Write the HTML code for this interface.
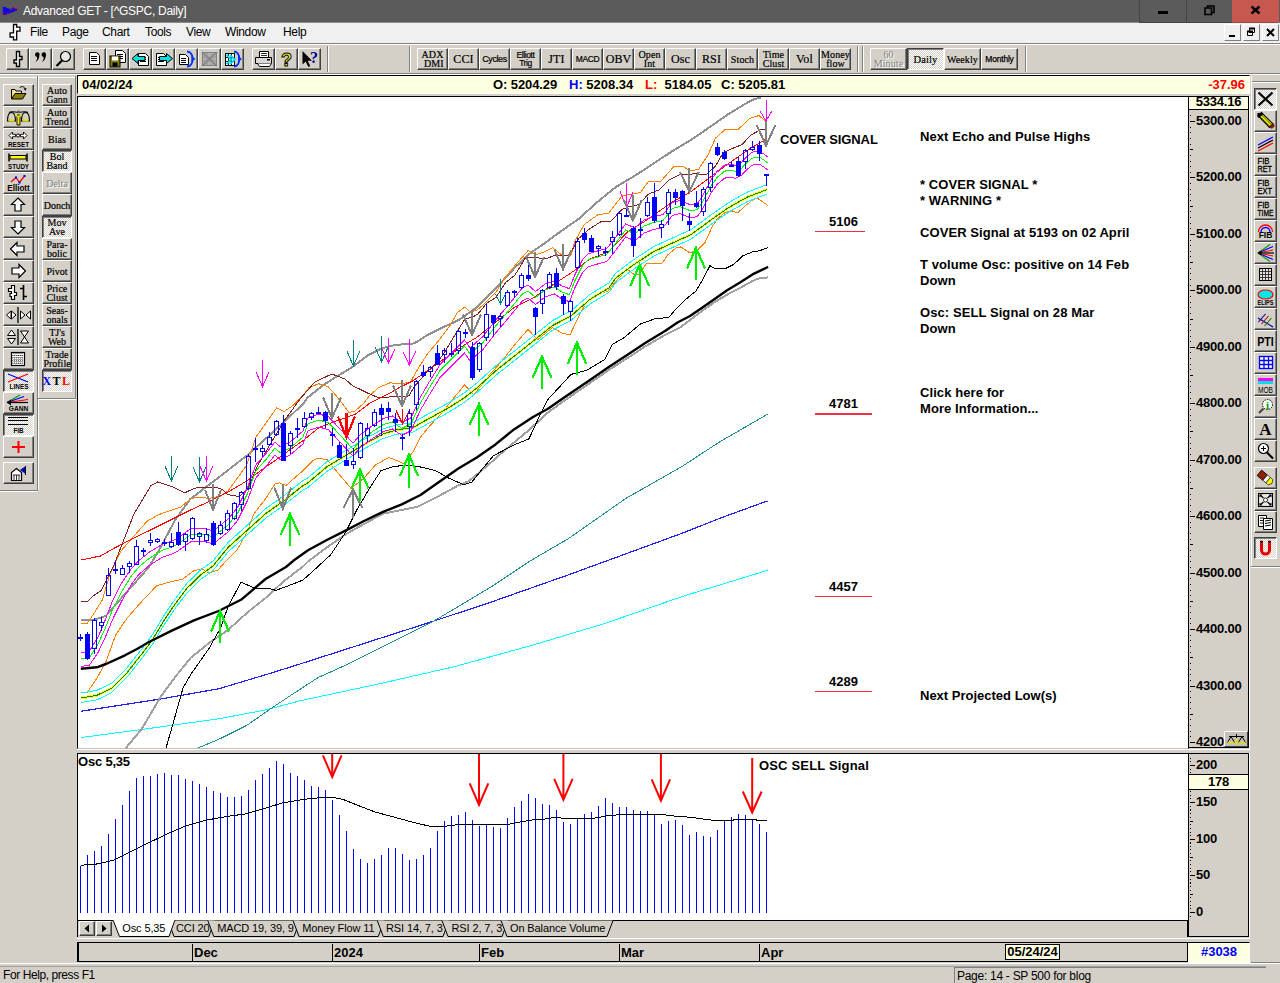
<!DOCTYPE html>
<html><head><meta charset="utf-8"><title>Advanced GET</title><style>
*{margin:0;padding:0;box-sizing:border-box}
html,body{width:1280px;height:983px;overflow:hidden;background:#d4d0c8;font-family:"Liberation Sans",sans-serif}
#r{position:absolute;left:0;top:0;width:1280px;height:983px;overflow:hidden;background:#d4d0c8}
.a{position:absolute}
.tb{position:absolute;background:#d4d0c8;border-top:1px solid #fff;border-left:1px solid #fff;border-right:1px solid #404040;border-bottom:1px solid #404040;box-shadow:inset -1px -1px 0 #808080;overflow:hidden}
.tb.dn{border-top:1px solid #404040;border-left:1px solid #404040;border-right:1px solid #fff;border-bottom:1px solid #fff;box-shadow:inset 1px 1px 0 #808080;background:#eae8e4 conic-gradient(#fff 25%,#d4d0c8 0 50%,#fff 0 75%,#d4d0c8 0) 0 0/2px 2px}
.tb svg{position:absolute;left:0;top:0}
.st{font-family:"Liberation Serif",serif;font-weight:bold;font-size:10px;line-height:9px;text-align:center;color:#000;display:flex;align-items:center;justify-content:center;letter-spacing:0.1px}
.gy{color:#808080;text-shadow:1px 1px 0 #fff}
.ax{position:absolute;font-weight:bold;font-size:13px;line-height:14px;color:#000;white-space:nowrap;letter-spacing:-0.2px}
.t{position:absolute;font-weight:bold;font-size:13px;line-height:16px;color:#000;white-space:nowrap}
.m{position:absolute;top:24px;font-size:12px;letter-spacing:-0.35px;line-height:16px;color:#000}
.hl{position:absolute;height:1px}
.vl{position:absolute;width:1px}
.tab{position:absolute;top:921px;font-size:11px;letter-spacing:-0.12px;line-height:14px;color:#000;white-space:nowrap}
#cs{position:absolute;left:0;top:0}
</style></head><body><div id="r">
<div class="a" style="left:0;top:0;width:1280px;height:23px;background:#5b5b5b;border-bottom:1px solid #8e8e8e"></div>
<div class="a" style="left:23px;top:3px;font-size:12px;letter-spacing:-0.28px;line-height:16px;color:#fff;white-space:nowrap">Advanced GET - [^GSPC, Daily]</div>
<svg class="a" style="left:0px;top:0px" width="22" height="22" viewBox="0 0 22 22"><path d="M2.800 7h3.300v1h2.500v1h2.200l1.800-1.500h1.500v1h2.800v2.300h-2.300v1h-2.500v1h-2.500v1h-2.300v1h-4.500z" fill="#0000f0"/><path d="M2.100 14.800L4.700 12.400L6.300 14.500L13.400 7.500L15.500 9.400L17.800 7.300" stroke="#ff0000" stroke-width="1" fill="none" stroke-dasharray="1.2 0.6"/></svg>
<div class="a" style="left:1139px;top:0;width:47px;height:23px;background:#5b5b5b;border-left:1px solid #454545;border-bottom:1px solid #454545"></div>
<div class="a" style="left:1186px;top:0;width:47px;height:23px;background:#5b5b5b;border-left:1px solid #454545;border-bottom:1px solid #454545"></div>
<div class="a" style="left:1232px;top:0;width:47px;height:23px;background:#c75850;border-bottom:1px solid #9a4a44"></div>
<div class="a" style="left:1158px;top:11px;width:10px;height:3px;background:#000"></div>
<svg class="a" style="left:1200px;top:2px" width="20" height="16"><path d="M5 6h6.500v6.500h-6.500z M7.500 6v-2h6.500v6.500h-2.500" fill="none" stroke="#000" stroke-width="1.600"/></svg>
<svg class="a" style="left:1247px;top:3px" width="16" height="14"><path d="M4.500 3.500l8 7M12.500 3.500l-8 7" stroke="#000" stroke-width="2.400"/></svg>
<div class="a" style="left:0;top:23px;width:1280px;height:20px;background:#f0f0f0"></div>
<div class="m" style="left:30px">File</div>
<div class="m" style="left:62px">Page</div>
<div class="m" style="left:102px">Chart</div>
<div class="m" style="left:145px">Tools</div>
<div class="m" style="left:186px">View</div>
<div class="m" style="left:225px">Window</div>
<div class="m" style="left:283px">Help</div>
<svg class="a" style="left:7px;top:23px" width="14" height="20" viewBox="0 0 14 20"><path d="M6.500 1.500h3.200v2.600h3.300v4h-3.300v8.700h-3.200v-2.800h-3.400v-4.200h3.400z" fill="#fff" stroke="#000" stroke-width="1.3"/></svg>
<div class="a" style="left:1224px;top:24px;width:17px;height:17px;background:#f0f0f0;border-top:1px solid #fff;border-left:1px solid #fff;border-right:1px solid #808080;border-bottom:1px solid #808080;overflow:hidden"><svg width="15" height="15" viewBox="0 0 15 15" ><rect x="4" y="10" width="6" height="2" fill="#000"/></svg></div>
<div class="a" style="left:1243px;top:24px;width:17px;height:17px;background:#f0f0f0;border-top:1px solid #fff;border-left:1px solid #fff;border-right:1px solid #808080;border-bottom:1px solid #808080;overflow:hidden"><svg width="15" height="15" viewBox="0 0 15 15" ><path d="M5.500 3.500h5v4h-5z M3.500 6.500h5v4h-5z" fill="#f0f0f0" stroke="#000" stroke-width="1"/><path d="M5 3.500h6M3 6.500h6" stroke="#000" stroke-width="2"/></svg></div>
<div class="a" style="left:1262px;top:24px;width:17px;height:17px;background:#f0f0f0;border-top:1px solid #fff;border-left:1px solid #fff;border-right:1px solid #808080;border-bottom:1px solid #808080;overflow:hidden"><svg width="15" height="15" viewBox="0 0 15 15" ><path d="M4 4l7 7M11 4l-7 7" stroke="#000" stroke-width="2"/></svg></div>
<div class="hl" style="left:0;top:43px;width:1280px;background:#808080"></div>
<div class="hl" style="left:0;top:44px;width:1280px;background:#fff"></div>
<div class="hl" style="left:0;top:73px;width:1280px;background:#808080"></div>
<div class="hl" style="left:0;top:74px;width:1280px;background:#fff"></div>
<div class="tb " style="left:6px;top:48px;width:23px;height:22px;"><svg width="21" height="20" viewBox="0 1 21 20" ><path d="M9.5 3.5h3v5h2.5v3h-2.5v7h-3v-3.5h-2.5v-3h2.5z" fill="#fff" stroke="#000" stroke-width="1.4"/></svg></div>
<div class="tb " style="left:29px;top:48px;width:23px;height:22px;"><svg width="21" height="20" viewBox="0 1 21 20" ><path d="M5 6.5a2.3 2.3 0 1 1 4.3 1.2c0 3-1.5 5-4 6.3c1.3-1.5 2-3 1.800-5.100a2.300 2.300 0 0 1-2.100-2.400z M11.5 6.5a2.300 2.300 0 1 1 4.300 1.200c0 3-1.500 5-4 6.300c1.300-1.500 2-3 1.800-5.100a2.300 2.300 0 0 1-2.100-2.400z" fill="#000"/></svg></div>
<div class="tb " style="left:52px;top:48px;width:23px;height:22px;"><svg width="21" height="20" viewBox="0 1 21 20" ><circle cx="12.500" cy="8.500" r="5" fill="#e8e8e8" stroke="#000" stroke-width="1.2"/><path d="M9 12.500l-5.500 5.500" stroke="#000" stroke-width="2.2"/></svg></div>
<div class="tb " style="left:83px;top:48px;width:23px;height:22px;"><svg width="21" height="20" viewBox="0 1 21 20" ><path d="M5.5 4.5h7l3 3v9h-10z" fill="#fff" stroke="#000" stroke-width="1"/><path d="M7 8.5h6" stroke="#000" stroke-width="1"/><path d="M7 10.5h6" stroke="#000" stroke-width="1"/><path d="M7 12.5h6" stroke="#000" stroke-width="1"/></svg></div>
<div class="tb " style="left:106px;top:48px;width:23px;height:22px;"><svg width="21" height="20" viewBox="0 1 21 20" ><path d="M8.5 2.5h7l3 3v9h-10z" fill="#fff" stroke="#000" stroke-width="1"/><path d="M10 6.5h6" stroke="#000" stroke-width="1"/><path d="M10 8.5h6" stroke="#000" stroke-width="1"/><path d="M10 10.5h6" stroke="#000" stroke-width="1"/><rect x="3" y="8" width="10" height="11" fill="#8a7a00" stroke="#000"/><rect x="5" y="8.500" width="6" height="4" fill="#fff"/><rect x="5.500" y="14.500" width="5" height="4" fill="#000"/></svg></div>
<div class="tb " style="left:129px;top:48px;width:23px;height:22px;"><svg width="21" height="20" viewBox="0 1 21 20" ><path d="M8.5 5.5h7l3 3v9h-10z" fill="#fff" stroke="#000" stroke-width="1"/><path d="M10 9.5h6" stroke="#000" stroke-width="1"/><path d="M10 11.5h6" stroke="#000" stroke-width="1"/><path d="M10 13.5h6" stroke="#000" stroke-width="1"/><path d="M2 10.500l6-5v3h7v4h-7v3z" fill="#00e0e0" stroke="#000" stroke-width="1"/></svg></div>
<div class="tb " style="left:152px;top:48px;width:23px;height:22px;"><svg width="21" height="20" viewBox="0 1 21 20" ><path d="M3.5 5.5h7l3 3v9h-10z" fill="#fff" stroke="#000" stroke-width="1"/><path d="M5 9.5h6" stroke="#000" stroke-width="1"/><path d="M5 11.5h6" stroke="#000" stroke-width="1"/><path d="M5 13.5h6" stroke="#000" stroke-width="1"/><path d="M19.500 10.500l-6-5v3h-7v4h7v3z" fill="#00e0e0" stroke="#000" stroke-width="1"/></svg></div>
<div class="tb " style="left:175px;top:48px;width:23px;height:22px;"><svg width="21" height="20" viewBox="0 1 21 20" ><path d="M3.5 6.5h6l3 3v7h-9z" fill="#fff" stroke="#000" stroke-width="1"/><path d="M5 10.5h5" stroke="#000" stroke-width="1"/><path d="M5 12.5h5" stroke="#000" stroke-width="1"/><path d="M5 14.5h5" stroke="#000" stroke-width="1"/><path d="M11 3.500c7.500 0 7.500 15 0 15" fill="none" stroke="#0030ff" stroke-width="2"/><path d="M15.500 8l4 3-4 3z" fill="#0030ff"/></svg></div>
<div class="tb " style="left:198px;top:48px;width:23px;height:22px;"><svg width="21" height="20" viewBox="0 1 21 20" ><rect x="3.500" y="4.500" width="14" height="13" fill="#b0b0b0" stroke="#808080"/><path d="M3 4l15 14M18 4l-15 14" stroke="#808080" stroke-width="1.5"/><path d="M3.5 9h14M3.5 13h14M8 4.500v13M13 4.500v13" stroke="#909090"/></svg></div>
<div class="tb " style="left:221px;top:48px;width:23px;height:22px;"><svg width="21" height="20" viewBox="0 1 21 20" ><rect x="3.500" y="5.500" width="9" height="12" fill="#fff" stroke="#000"/><path d="M3.500 9.500h9M3.500 13.500h9M6.500 5.500v12M9.500 5.500v12" stroke="#000" stroke-width=".9"/><path d="M4.500 7l5 4.500-5 4.500M8 7l5 4.500-5 4.500" fill="none" stroke="#00d8e8" stroke-width="1.800"/><path d="M12 3.500c7 0 7 15 0 15" fill="none" stroke="#0030ff" stroke-width="2"/><path d="M16 8l4 3-4 3z" fill="#0030ff"/></svg></div>
<div class="tb " style="left:252px;top:48px;width:23px;height:22px;"><svg width="21" height="20" viewBox="0 1 21 20" ><path d="M6.500 9v-5.500h9l0 5.500" fill="#fff" stroke="#000"/><path d="M2.500 9.500h16v6h-16z" fill="#d8d8d8" stroke="#000"/><path d="M4.500 15.500l2 3h10l2-3" fill="#fff" stroke="#000"/><path d="M8 5.500h6M8 7.500h6" stroke="#000" stroke-width=".8"/><rect x="14" y="11" width="3" height="1.500" fill="#000"/></svg></div>
<div class="tb " style="left:275px;top:48px;width:23px;height:22px;"><svg width="21" height="20" viewBox="0 1 21 20" ><text x="10.500" y="17.500" font-family="Liberation Sans, sans-serif" font-size="18" font-weight="bold" text-anchor="middle" fill="#ffff00" stroke="#000" stroke-width="1">?</text></svg></div>
<div class="tb " style="left:298px;top:48px;width:23px;height:22px;"><svg width="21" height="20" viewBox="0 1 21 20" ><path d="M3.500 3v13.500l3.200-3 2.600 5.500 2-1-2.600-5.200h4.300z" fill="#000"/><text x="15" y="14.500" font-family="Liberation Serif, serif" font-size="16" font-weight="bold" text-anchor="middle" fill="#000090">?</text></svg></div>
<div class="vl" style="left:327px;top:46px;height:26px;background:#808080"></div><div class="vl" style="left:328px;top:46px;height:26px;background:#fff"></div>
<div class="vl" style="left:409px;top:46px;height:26px;background:#808080"></div><div class="vl" style="left:410px;top:46px;height:26px;background:#fff"></div>
<div class="vl" style="left:857px;top:46px;height:26px;background:#808080"></div><div class="vl" style="left:858px;top:46px;height:26px;background:#fff"></div>
<div class="vl" style="left:862px;top:46px;height:26px;background:#808080"></div><div class="vl" style="left:863px;top:46px;height:26px;background:#fff"></div>
<div class="vl" style="left:1025px;top:46px;height:26px;background:#808080"></div><div class="vl" style="left:1026px;top:46px;height:26px;background:#fff"></div>
<div class="tb st " style="left:417px;top:48px;width:31px;height:22px;font-size:10px;font-weight:normal;-webkit-text-stroke:0.2px #000;">ADX<br>&nbsp;DMI</div>
<div class="tb st " style="left:448px;top:48px;width:31px;height:22px;font-size:12px;font-weight:normal;-webkit-text-stroke:0.2px #000;">CCI</div>
<div class="tb st " style="left:479px;top:48px;width:31px;height:22px;font-size:9px;font-family:'Liberation Sans',sans-serif;letter-spacing:-0.4px;line-height:8px;font-weight:normal;-webkit-text-stroke:0.2px #000;">Cycles</div>
<div class="tb st " style="left:510px;top:48px;width:31px;height:22px;font-size:8.5px;font-family:'Liberation Sans',sans-serif;letter-spacing:-0.4px;line-height:8px;font-weight:normal;-webkit-text-stroke:0.2px #000;">Elliott<br>Trig</div>
<div class="tb st " style="left:541px;top:48px;width:31px;height:22px;font-size:12px;font-weight:normal;-webkit-text-stroke:0.2px #000;">JTI</div>
<div class="tb st " style="left:572px;top:48px;width:31px;height:22px;font-size:8.5px;font-family:'Liberation Sans',sans-serif;letter-spacing:-0.4px;line-height:8px;font-weight:normal;-webkit-text-stroke:0.2px #000;">MACD</div>
<div class="tb st " style="left:603px;top:48px;width:31px;height:22px;font-size:12px;font-weight:normal;-webkit-text-stroke:0.2px #000;">OBV</div>
<div class="tb st " style="left:634px;top:48px;width:31px;height:22px;font-size:10px;font-weight:normal;-webkit-text-stroke:0.2px #000;">Open<br>Int</div>
<div class="tb st " style="left:665px;top:48px;width:31px;height:22px;font-size:12px;font-weight:normal;-webkit-text-stroke:0.2px #000;">Osc</div>
<div class="tb st " style="left:696px;top:48px;width:31px;height:22px;font-size:12px;font-weight:normal;-webkit-text-stroke:0.2px #000;">RSI</div>
<div class="tb st " style="left:727px;top:48px;width:31px;height:22px;font-size:10px;font-weight:normal;-webkit-text-stroke:0.2px #000;">Stoch</div>
<div class="tb st " style="left:758px;top:48px;width:31px;height:22px;font-size:10px;font-weight:normal;-webkit-text-stroke:0.2px #000;">Time<br>Clust</div>
<div class="tb st " style="left:789px;top:48px;width:31px;height:22px;font-size:12px;font-weight:normal;-webkit-text-stroke:0.2px #000;">Vol</div>
<div class="tb st " style="left:820px;top:48px;width:31px;height:22px;font-size:10px;font-weight:normal;-webkit-text-stroke:0.2px #000;">Money<br>flow</div>
<div class="tb st gy" style="left:870px;top:48px;width:37px;height:22px;font-size:10px;font-weight:normal;">60<br>Minute</div>
<div class="tb st dn" style="left:907px;top:48px;width:37px;height:22px;font-size:10.5px;font-weight:normal;-webkit-text-stroke:0.2px #000;">Daily</div>
<div class="tb st " style="left:944px;top:48px;width:37px;height:22px;font-size:10px;font-weight:normal;-webkit-text-stroke:0.2px #000;">Weekly</div>
<div class="tb st " style="left:981px;top:48px;width:37px;height:22px;font-size:8.5px;font-family:'Liberation Sans',sans-serif;font-weight:normal;-webkit-text-stroke:0.25px #000;letter-spacing:-0.2px;">Monthly</div>
<div class="hl" style="left:0;top:77px;width:37px;background:#fff"></div><div class="hl" style="left:39px;top:77px;width:36px;background:#fff"></div>
<div class="vl" style="left:37px;top:76px;height:414px;background:#808080"></div><div class="vl" style="left:38px;top:76px;height:414px;background:#fff"></div>
<div class="vl" style="left:75px;top:76px;height:322px;background:#808080"></div>
<div class="hl" style="left:38px;top:398px;width:38px;background:#808080"></div><div class="hl" style="left:38px;top:399px;width:38px;background:#fff"></div>
<div class="hl" style="left:0px;top:490px;width:38px;background:#808080"></div><div class="hl" style="left:0px;top:491px;width:38px;background:#fff"></div>
<div class="tb " style="left:3px;top:84px;width:31px;height:22px;"><svg width="28" height="20" viewBox="0 0 28 20" ><path d="M7.500 14v-9.500h3.500l1 1.500h5.500v2.500" fill="#f0e890" stroke="#000" stroke-width="1"/><path d="M7.500 14l3.500-5.500h11l-3.500 5.500z" fill="#8a8000" stroke="#000" stroke-width="1"/><path d="M15.500 3c1.500-2 4.500-1.800 5.500.5" fill="none" stroke="#000" stroke-width="1"/><path d="M19.500 3.500l3-.5-1 3z" fill="#000"/></svg></div>
<div class="tb " style="left:3px;top:106px;width:31px;height:22px;"><svg width="29" height="20" viewBox="0 0 29 20" ><path d="M5 5.500c3-2 6 0 9.500 0c3.500 0 6.500-2 9.500 0" fill="none" stroke="#000" stroke-width="1.100"/><path d="M3.500 14c0-5 1.500-8.500 4-8.500c2.500 0 4 3.500 4 8.500zM17.500 14c0-5 1.500-8.500 4-8.500c2.500 0 4 3.500 4 8.500z" fill="#d4d0c8" stroke="#000" stroke-width="1.100"/><path d="M4.500 13.500h6M18.500 13.500h6" stroke="#e8e000" stroke-width="1.800"/><path d="M13 8h3v10h-3z" fill="#f0e800" stroke="#000" stroke-width=".9"/><path d="M11 7.500l3.500 2.500 3.500-2.500" fill="none" stroke="#e8e000" stroke-width="1.500"/><circle cx="14.500" cy="5" r="1.400" fill="#606060"/></svg></div>
<div class="tb " style="left:3px;top:128px;width:31px;height:22px;"><svg width="28" height="20" viewBox="0 0 28 20" ><path d="M5 6.500l3.500-3.500v2.300h3v2.400h-3v2.300zM23 6.500l-3.500-3.500v2.300h-3v2.400h3v2.300z" fill="#fff" stroke="#000" stroke-width=".9"/><circle cx="14" cy="6.500" r="1.600" fill="#fff" stroke="#000"/><text x="4" y="17.5" font-family="Liberation Sans, sans-serif" font-size="7.5" font-weight="bold" textLength="21" lengthAdjust="spacingAndGlyphs">RESET</text></svg></div>
<div class="tb " style="left:3px;top:150px;width:31px;height:22px;"><svg width="28" height="20" viewBox="0 0 28 20" ><rect x="6" y="4.500" width="16" height="3.500" fill="#ffff00" stroke="#000"/><path d="M5 2.500v8M23 2.500v8" stroke="#000" stroke-width="1.500"/><text x="4" y="17.5" font-family="Liberation Sans, sans-serif" font-size="7.5" font-weight="bold" textLength="21" lengthAdjust="spacingAndGlyphs">STUDY</text></svg></div>
<div class="tb " style="left:3px;top:172px;width:31px;height:22px;"><svg width="28" height="20" viewBox="0 0 28 20" ><path d="M7 9l5-4.500 3.500 5 5-6.500" fill="none" stroke="#f00" stroke-width="1.300"/><rect x="11" y="3.500" width="2" height="2" fill="#00f"/><rect x="14.500" y="8.500" width="2" height="2" fill="#00f"/><rect x="19.500" y="2" width="2" height="2" fill="#00f"/><text x="3.25" y="17.8" font-family="Liberation Sans, sans-serif" font-size="8.5" font-weight="bold" textLength="22.5" lengthAdjust="spacingAndGlyphs">Elliott</text></svg></div>
<div class="tb " style="left:3px;top:194px;width:31px;height:22px;"><svg width="28" height="20" viewBox="0 0 28 20" ><path d="M14 3l6.500 6.500h-3.500v6.500h-6v-6.500h-3.500z" fill="#fff" stroke="#000" stroke-width="1.200"/></svg></div>
<div class="tb " style="left:3px;top:216px;width:31px;height:22px;"><svg width="28" height="20" viewBox="0 0 28 20" ><path d="M14 17l6.500-6.500h-3.500v-6.500h-6v6.500h-3.500z" fill="#fff" stroke="#000" stroke-width="1.200"/></svg></div>
<div class="tb " style="left:3px;top:238px;width:31px;height:22px;"><svg width="28" height="20" viewBox="0 0 28 20" ><path d="M6.500 10l6.500-6.500v3.500h7v6h-7v3.500z" fill="#fff" stroke="#000" stroke-width="1.200"/></svg></div>
<div class="tb " style="left:3px;top:260px;width:31px;height:22px;"><svg width="28" height="20" viewBox="0 0 28 20" ><path d="M21.500 10l-6.500-6.500v3.500h-7v6h7v3.500z" fill="#fff" stroke="#000" stroke-width="1.200"/></svg></div>
<div class="tb " style="left:3px;top:282px;width:31px;height:22px;"><svg width="28" height="20" viewBox="0 0 28 20" ><path d="M4.500 5.500h3v-3h3v7h2v3h-2v4h-3v-3h-1.500v-3h1.500v-2h-3z" fill="#fff" stroke="#000" stroke-width="1.200"/><path d="M19.500 2v15M16 5.500h3.500M19.500 13.500h3.500" stroke="#000" stroke-width="1.600" fill="none"/></svg></div>
<div class="tb " style="left:3px;top:304px;width:31px;height:22px;"><svg width="28" height="20" viewBox="0 0 28 20" ><path d="M14 2v16" stroke="#000" stroke-width="1.300"/><path d="M2.500 10l4.500-4v8zM12 10l-4.500-4v8zM16.500 6v8l4.500-4zM26.500 6v8l-4.500-4z" fill="#fff" stroke="#000" stroke-width="1"/></svg></div>
<div class="tb " style="left:3px;top:326px;width:31px;height:22px;"><svg width="28" height="20" viewBox="0 0 28 20" ><path d="M14 2v16" stroke="#000" stroke-width="1.300"/><path d="M7.500 3l-4 5.500h8zM7.500 17l-4-5.500h8zM16.500 4h8l-4 6zM16.500 16h8l-4-6z" fill="#fff" stroke="#000" stroke-width="1"/></svg></div>
<div class="tb " style="left:3px;top:348px;width:31px;height:22px;"><svg width="28" height="20" viewBox="0 0 28 20" ><rect x="7.500" y="3.500" width="13" height="13" fill="#fff" stroke="#000" stroke-width="1.200"/><path d="M10 4v12M12 4v12M14 4v12M16 4v12M18 4v12" stroke="#000" stroke-width=".7" stroke-dasharray="1 1"/><path d="M8 6.500h12M8 9h12M8 11.500h12M8 14h12" stroke="#000" stroke-width=".6" stroke-dasharray="1 1"/></svg></div>
<div class="tb dn" style="left:3px;top:370px;width:31px;height:22px;"><svg width="28" height="20" viewBox="0 0 28 20" ><path d="M4 3l20 8" stroke="#0000ff" stroke-width="1.200"/><path d="M4 11l20-8" stroke="#f00" stroke-width="1.200"/><text x="5.5" y="17.8" font-family="Liberation Sans, sans-serif" font-size="7.5" font-weight="bold" textLength="19" lengthAdjust="spacingAndGlyphs">LINES</text></svg></div>
<div class="tb " style="left:3px;top:392px;width:31px;height:22px;"><svg width="28" height="20" viewBox="0 0 28 20" ><path d="M3 9.500l13-7.500" stroke="#00a000" stroke-width="1.200"/><path d="M3 9.500l17-6" stroke="#0000ff" stroke-width="1.200"/><path d="M3 9.500l21-3" stroke="#f00" stroke-width="1.200"/><path d="M3 9.500h21" stroke="#000" stroke-width="1.200"/><path d="M3 9.500l4-3v6z" fill="#000"/><text x="4.75" y="18" font-family="Liberation Sans, sans-serif" font-size="7.5" font-weight="bold" textLength="19.5" lengthAdjust="spacingAndGlyphs">GANN</text></svg></div>
<div class="tb dn" style="left:3px;top:414px;width:31px;height:22px;"><svg width="28" height="20" viewBox="0 0 28 20" ><path d="M4 2.500h20M4 5.500h20M4 9.500h20" stroke="#000" stroke-width="1.200"/><text x="9.5" y="18" font-family="Liberation Sans, sans-serif" font-size="7.5" font-weight="bold" textLength="10" lengthAdjust="spacingAndGlyphs">FIB</text></svg></div>
<div class="tb " style="left:3px;top:436px;width:31px;height:22px;"><svg width="28" height="20" viewBox="0 0 28 20" ><path d="M14.500 4v12M8 10h13" stroke="#f00" stroke-width="2"/></svg></div>
<div class="tb " style="left:3px;top:462px;width:31px;height:22px;"><svg width="28" height="20" viewBox="0 0 28 20" ><path d="M7.500 17.500v-8l5-4 5 4v8z" fill="#fff" stroke="#000" stroke-width="1.200"/><path d="M10 17v-5M12.500 17v-5M15 17v-5M9 12h7" stroke="#000" stroke-width=".8"/><path d="M16 7l5-3.500v7z" fill="#0000c0"/><path d="M21.500 3v9" stroke="#000" stroke-width="1"/></svg></div>
<div class="tb st " style="left:42px;top:84px;width:30px;height:22px;font-size:10px;letter-spacing:0px;font-weight:normal;-webkit-text-stroke:0.2px #000;">Auto<br>Gann</div>
<div class="tb st " style="left:42px;top:106px;width:30px;height:22px;font-size:10px;letter-spacing:0px;font-weight:normal;-webkit-text-stroke:0.2px #000;">Auto<br>Trend</div>
<div class="tb st " style="left:42px;top:128px;width:30px;height:22px;font-size:10px;letter-spacing:0px;font-weight:normal;-webkit-text-stroke:0.2px #000;">Bias</div>
<div class="tb st dn" style="left:42px;top:150px;width:30px;height:22px;font-size:10px;letter-spacing:0px;font-weight:normal;-webkit-text-stroke:0.2px #000;">Bol<br>Band</div>
<div class="tb st gy" style="left:42px;top:172px;width:30px;height:22px;font-size:10px;letter-spacing:0px;font-weight:normal;">Delta</div>
<div class="tb st " style="left:42px;top:194px;width:30px;height:22px;font-size:10px;letter-spacing:0px;font-weight:normal;-webkit-text-stroke:0.2px #000;">Donch</div>
<div class="tb st dn" style="left:42px;top:216px;width:30px;height:22px;font-size:10px;letter-spacing:0px;font-weight:normal;-webkit-text-stroke:0.2px #000;">Mov<br>Ave</div>
<div class="tb st " style="left:42px;top:238px;width:30px;height:22px;font-size:10px;letter-spacing:0px;font-weight:normal;-webkit-text-stroke:0.2px #000;">Para-<br>bolic</div>
<div class="tb st " style="left:42px;top:260px;width:30px;height:22px;font-size:10px;letter-spacing:0px;font-weight:normal;-webkit-text-stroke:0.2px #000;">Pivot</div>
<div class="tb st " style="left:42px;top:282px;width:30px;height:22px;font-size:10px;letter-spacing:0px;font-weight:normal;-webkit-text-stroke:0.2px #000;">Price<br>Clust</div>
<div class="tb st " style="left:42px;top:304px;width:30px;height:22px;font-size:10px;letter-spacing:0px;font-weight:normal;-webkit-text-stroke:0.2px #000;">Seas-<br>onals</div>
<div class="tb st " style="left:42px;top:326px;width:30px;height:22px;font-size:10px;letter-spacing:0px;font-weight:normal;-webkit-text-stroke:0.2px #000;">TJ's<br>Web</div>
<div class="tb st " style="left:42px;top:348px;width:30px;height:22px;font-size:10px;letter-spacing:0px;font-weight:normal;-webkit-text-stroke:0.2px #000;">Trade<br>Profile</div>
<div class="tb st dn" style="left:42px;top:370px;width:30px;height:22px;font-size:12px;letter-spacing:1.5px;"><span style="color:#00f">X</span><span>T</span><span style="color:#f00">L</span></div>
<div class="vl" style="left:1251px;top:76px;height:490px;background:#fff"></div>
<div class="hl" style="left:1251px;top:566px;width:29px;background:#808080"></div><div class="hl" style="left:1251px;top:567px;width:29px;background:#fff"></div>
<div class="hl" style="left:1252px;top:81px;width:28px;background:#808080"></div><div class="hl" style="left:1252px;top:82px;width:28px;background:#fff"></div>
<div class="tb dn" style="left:1254px;top:88px;width:23px;height:22px;"><svg width="21" height="20" viewBox="0 0 21 20" ><path d="M3.500 3.500l14 13M17.500 3.500l-14 13" stroke="#000" stroke-width="2.200"/></svg></div>
<div class="tb " style="left:1254px;top:110px;width:23px;height:22px;"><svg width="21" height="20" viewBox="0 0 21 20" ><path d="M3 4.500l3.500-3 11.500 11.500-3.500 3.500z" fill="#ffff00" stroke="#000" stroke-width="1.1"/><path d="M2.500 2l4.500 0 1 1.500-4 3.500-1.500-1z" fill="#000"/><path d="M14.500 16l3.500-3.500 1.500 2.500-2.500 2.500z" fill="#902000" stroke="#501000" stroke-width=".6"/><path d="M5 5.500l10.500 10.500M6.500 4l10.500 10.500" stroke="#000" stroke-width=".7"/></svg></div>
<div class="tb " style="left:1254px;top:132px;width:23px;height:22px;"><svg width="21" height="20" viewBox="0 0 21 20" ><path d="M3 12l15-8" stroke="#00f" stroke-width="1.200"/><path d="M3 15l15-8" stroke="#000" stroke-width="1.200"/><path d="M3 18l15-8" stroke="#f00" stroke-width="1.200"/></svg></div>
<div class="tb " style="left:1254px;top:154px;width:23px;height:22px;"><svg width="21" height="20" viewBox="0 0 21 20" ><text x="2.5" y="8.5" font-family="Liberation Sans, sans-serif" font-size="9" font-weight="normal" stroke="#000" stroke-width="0.3" textLength="12" lengthAdjust="spacingAndGlyphs">FIB</text><text x="2.5" y="17" font-family="Liberation Sans, sans-serif" font-size="9" font-weight="normal" stroke="#000" stroke-width="0.3" textLength="14.5" lengthAdjust="spacingAndGlyphs">RET</text></svg></div>
<div class="tb " style="left:1254px;top:176px;width:23px;height:22px;"><svg width="21" height="20" viewBox="0 0 21 20" ><text x="2.5" y="8.5" font-family="Liberation Sans, sans-serif" font-size="9" font-weight="normal" stroke="#000" stroke-width="0.3" textLength="12" lengthAdjust="spacingAndGlyphs">FIB</text><text x="2.5" y="17" font-family="Liberation Sans, sans-serif" font-size="9" font-weight="normal" stroke="#000" stroke-width="0.3" textLength="14.5" lengthAdjust="spacingAndGlyphs">EXT</text></svg></div>
<div class="tb " style="left:1254px;top:198px;width:23px;height:22px;"><svg width="21" height="20" viewBox="0 0 21 20" ><text x="2.5" y="8.5" font-family="Liberation Sans, sans-serif" font-size="9" font-weight="normal" stroke="#000" stroke-width="0.3" textLength="12" lengthAdjust="spacingAndGlyphs">FIB</text><text x="2.5" y="17" font-family="Liberation Sans, sans-serif" font-size="9" font-weight="normal" stroke="#000" stroke-width="0.3" textLength="16" lengthAdjust="spacingAndGlyphs">TIME</text></svg></div>
<div class="tb " style="left:1254px;top:220px;width:23px;height:22px;"><svg width="21" height="20" viewBox="0 0 21 20" ><path d="M3.500 11a7 7 0 0 1 14 0" fill="none" stroke="#f00" stroke-width="1.300"/><path d="M6 11a4.500 4.500 0 0 1 9 0" fill="none" stroke="#00f" stroke-width="1.300"/><text x="10.5" y="16.5" font-family="Liberation Sans, sans-serif" font-size="8.5" font-weight="bold" fill="#000" text-anchor="middle" letter-spacing="0">FIB</text></svg></div>
<div class="tb " style="left:1254px;top:242px;width:23px;height:22px;"><svg width="21" height="20" viewBox="0 0 21 20" ><path d="M3 10l12-8.500" stroke="#00a000" stroke-width="1.100"/><path d="M3 10l15-6.500" stroke="#00f" stroke-width="1.100"/><path d="M3 10l15-3" stroke="#f00" stroke-width="1.100"/><path d="M3 10h16" stroke="#000" stroke-width="1.200"/><path d="M3 10l15 3" stroke="#f00" stroke-width="1.100"/><path d="M3 10l15 6.500" stroke="#00f" stroke-width="1.100"/><path d="M3 10l12 8.500" stroke="#00a000" stroke-width="1.100"/><path d="M2.500 10l4-2.500v5z" fill="#000"/></svg></div>
<div class="tb " style="left:1254px;top:264px;width:23px;height:22px;"><svg width="21" height="20" viewBox="0 0 21 20" ><rect x="4.500" y="3.500" width="12" height="12" fill="#e4e2dc" stroke="#000"/><path d="M4.500 6.500h12M4.500 9.500h12M4.500 12.500h12M7.500 3.500v12M10.500 3.500v12M13.500 3.500v12" stroke="#000" stroke-width=".7"/></svg></div>
<div class="tb " style="left:1254px;top:286px;width:23px;height:22px;"><svg width="21" height="20" viewBox="0 0 21 20" ><ellipse cx="10.500" cy="7.500" rx="7.500" ry="4.500" fill="#00e8e8" stroke="#f00" stroke-width="1.200"/><text x="2.5" y="18" font-family="Liberation Sans, sans-serif" font-size="7" font-weight="bold" textLength="16" lengthAdjust="spacingAndGlyphs">ELIPS</text></svg></div>
<div class="tb " style="left:1254px;top:308px;width:23px;height:22px;"><svg width="21" height="20" viewBox="0 0 21 20" ><path d="M3 9l15 9" stroke="#0000a0" stroke-width="1.200"/><path d="M3.500 13l7-8" stroke="#0000a0" stroke-width="1.100"/><path d="M6.500 15l7-8" stroke="#c00000" stroke-width="1.100"/><path d="M9.500 17l7-8" stroke="#008000" stroke-width="1.100"/></svg></div>
<div class="tb " style="left:1254px;top:330px;width:23px;height:22px;"><svg width="21" height="20" viewBox="0 0 21 20" ><text x="2.25" y="14.5" font-family="Liberation Sans, sans-serif" font-size="12.5" font-weight="bold" textLength="16.5" lengthAdjust="spacingAndGlyphs">PTI</text></svg></div>
<div class="tb " style="left:1254px;top:352px;width:23px;height:22px;"><svg width="21" height="20" viewBox="0 0 21 20" ><rect x="4.500" y="3.500" width="13" height="12" fill="#fff" stroke="#00f" stroke-width="1.300"/><path d="M4.500 7.500h13M4.500 11.500h13M9 3.500v12M13.500 3.500v12" stroke="#00f" stroke-width="1.300"/></svg></div>
<div class="tb " style="left:1254px;top:374px;width:23px;height:22px;"><svg width="21" height="20" viewBox="0 0 21 20" ><rect x="3" y="3" width="15" height="3" fill="#ff00ff"/><rect x="3" y="6" width="15" height="3" fill="#00e0e0"/><text x="3" y="18" font-family="Liberation Sans, sans-serif" font-size="9.5" font-weight="normal" textLength="15" lengthAdjust="spacingAndGlyphs">MOB</text></svg></div>
<div class="tb " style="left:1254px;top:396px;width:23px;height:22px;"><svg width="21" height="20" viewBox="0 0 21 20" ><circle cx="12.500" cy="7.500" r="5" fill="#f4fff4" stroke="#000" stroke-dasharray="1.5 1"/><path d="M8.500 11.500l-4.500 4.500" stroke="#404040" stroke-width="2"/><text x="12.5" y="11.5" font-family="Liberation Serif, sans-serif" font-size="11" font-weight="bold" fill="#00a000" text-anchor="middle" letter-spacing="0">i</text></svg></div>
<div class="tb " style="left:1254px;top:418px;width:23px;height:22px;"><svg width="21" height="20" viewBox="0 0 21 20" ><text x="10.5" y="15.5" font-family="Liberation Serif, sans-serif" font-size="17" font-weight="bold" fill="#000" text-anchor="middle" letter-spacing="0">A</text></svg></div>
<div class="tb " style="left:1254px;top:440px;width:23px;height:22px;"><svg width="21" height="20" viewBox="0 0 21 20" ><circle cx="8.500" cy="7.500" r="5" fill="#fff" stroke="#000" stroke-width="1.200"/><path d="M12 11.500l6 6" stroke="#000" stroke-width="2.200"/><path d="M6 7.500h5M8.500 5v5" stroke="#000" stroke-width="1"/></svg></div>
<div class="tb " style="left:1254px;top:467px;width:23px;height:22px;"><svg width="21" height="20" viewBox="0 0 21 20" ><g transform="rotate(40 10.5 10)"><rect x="2.500" y="6.500" width="7.500" height="7" fill="#902000" stroke="#000" stroke-width=".8"/><rect x="10" y="6.500" width="4" height="7" fill="#f4f4f4" stroke="#000" stroke-width=".6"/><path d="M14 6.500h3l2 3.500-2 3.500h-3z" fill="#ffff00" stroke="#000" stroke-width=".6"/></g></svg></div>
<div class="tb " style="left:1254px;top:489px;width:23px;height:22px;"><svg width="21" height="20" viewBox="0 0 21 20" ><rect x="3.500" y="3.500" width="14" height="13" fill="#e8e6e0" stroke="#000"/><path d="M5 5l3.500 3M16 5l-3.500 3M5 15l3.500-3M16 15l-3.500-3" stroke="#000" stroke-width="1.300"/><path d="M4.500 4.500h3l-3 3zM16.500 4.500h-3l3 3zM4.500 15.500h3l-3-3zM16.500 15.500h-3l3-3z" fill="#000"/><circle cx="10.500" cy="10" r="2" fill="#fff" stroke="#000" stroke-width=".8"/></svg></div>
<div class="tb " style="left:1254px;top:511px;width:23px;height:22px;"><svg width="21" height="20" viewBox="0 0 21 20" ><path d="M3.500 3.500h8v11h-8z" fill="#fff" stroke="#000"/><path d="M8.500 6.500h9v11h-9z" fill="#fff" stroke="#000"/><path d="M10 9l6-1M10 11.500l6-1M10 14l6-1" stroke="#000" stroke-width="1"/><path d="M5 6h4M5 8.500h3M5 11h3" stroke="#000" stroke-width=".9"/></svg></div>
<div class="tb dn" style="left:1254px;top:537px;width:23px;height:22px;"><svg width="21" height="20" viewBox="0 0 21 20" ><path d="M6.500 4v8a4 4 0 0 0 8 0v-8" fill="none" stroke="#e80000" stroke-width="3"/><path d="M5 3.500h3M13 3.500h3" stroke="#000" stroke-width="1.500"/></svg></div>
<div class="a" style="left:77px;top:75px;width:1173px;height:19px;background:#ffffe1;border-left:1px solid #000;border-top:1px solid #000;border-bottom:1px solid #fff;border-right:1px solid #fff"></div>
<div class="t" style="left:82px;top:77px">04/02/24</div>
<div class="t" style="left:493px;top:77px;letter-spacing:-0.1px">O: 5204.29</div>
<div class="t" style="left:569px;top:77px"><span style="color:#00f">H:</span> 5208.34</div>
<div class="t" style="left:645px;top:77px"><span style="color:#f00">L:</span>&nbsp; 5184.05</div>
<div class="t" style="left:721px;top:77px">C: 5205.81</div>
<div class="t" style="left:1180px;top:77px;width:65px;text-align:right;color:#f00">-37.96</div>
<div class="a" style="left:3px;top:968px;font-size:12px;letter-spacing:-0.42px;line-height:15px;white-space:nowrap">For Help, press F1</div>
<div class="a" style="left:954px;top:967px;width:312px;height:16px;border-left:1px solid #808080;border-top:1px solid #808080;font-size:12px;letter-spacing:-0.28px;line-height:16px;padding-left:2px;white-space:nowrap">Page: 14 - SP 500 for blog</div>
<div class="a" style="left:77px;top:96px;width:1112px;height:653px;background:#fff;border-left:1px solid #000;border-top:1px solid #000;border-right:1px solid #000;border-bottom:1px solid #c0c0c0"></div>
<div class="hl" style="left:77px;top:749px;width:1173px;background:#fff"></div>
<div class="a" style="left:1189px;top:96px;width:60px;height:652px;border-top:1px solid #000;border-right:1px solid #000;border-bottom:1px solid #000;background:#d4d0c8"></div>
<div class="vl" style="left:1249px;top:96px;height:654px;background:#fff"></div>
<div class="a" style="left:1189px;top:97px;width:59px;height:13px;background:#ffffe1;border-bottom:1px solid #000"></div>
<div class="ax" style="left:1189px;top:95px;width:59px;text-align:center">5334.16</div>
<div class="hl" style="left:1190px;top:121px;width:5px;background:#000"></div>
<div class="ax" style="left:1196px;top:114px">5300.00</div>
<div class="hl" style="left:1190px;top:177px;width:5px;background:#000"></div>
<div class="ax" style="left:1196px;top:170px">5200.00</div>
<div class="hl" style="left:1190px;top:234px;width:5px;background:#000"></div>
<div class="ax" style="left:1196px;top:227px">5100.00</div>
<div class="hl" style="left:1190px;top:290px;width:5px;background:#000"></div>
<div class="ax" style="left:1196px;top:283px">5000.00</div>
<div class="hl" style="left:1190px;top:347px;width:5px;background:#000"></div>
<div class="ax" style="left:1196px;top:340px">4900.00</div>
<div class="hl" style="left:1190px;top:403px;width:5px;background:#000"></div>
<div class="ax" style="left:1196px;top:396px">4800.00</div>
<div class="hl" style="left:1190px;top:460px;width:5px;background:#000"></div>
<div class="ax" style="left:1196px;top:453px">4700.00</div>
<div class="hl" style="left:1190px;top:516px;width:5px;background:#000"></div>
<div class="ax" style="left:1196px;top:509px">4600.00</div>
<div class="hl" style="left:1190px;top:573px;width:5px;background:#000"></div>
<div class="ax" style="left:1196px;top:566px">4500.00</div>
<div class="hl" style="left:1190px;top:629px;width:5px;background:#000"></div>
<div class="ax" style="left:1196px;top:622px">4400.00</div>
<div class="hl" style="left:1190px;top:686px;width:5px;background:#000"></div>
<div class="ax" style="left:1196px;top:679px">4300.00</div>
<div class="hl" style="left:1190px;top:742px;width:5px;background:#000"></div>
<div class="ax" style="left:1196px;top:735px">4200</div>
<div class="a" style="left:1224px;top:731px;width:24px;height:16px;background:#c4c0b8;border-top:1px solid #fff;border-left:1px solid #fff;border-right:1px solid #404040;border-bottom:1px solid #404040"></div>
<svg class="a" style="left:1226px;top:733px" width="21" height="12" viewBox="0 0 21 12"><path d="M10.500 1v10M3 3.500h15M5 3.500l-3.500 6h7zM16 3.500l-3.500 6h7z" fill="none" stroke="#000" stroke-width="1"/><path d="M1.500 9.500h7M12.500 9.500h7" stroke="#e8e000" stroke-width="1.500"/><path d="M10.500 5v7" stroke="#e8e000" stroke-width="1.500"/></svg>
<div class="a" style="left:77px;top:753px;width:1112px;height:168px;background:#fff;border-left:1px solid #000;border-top:1px solid #000;border-right:1px solid #000;border-bottom:1px solid #000"></div>
<div class="a" style="left:1189px;top:753px;width:60px;height:184px;border-top:1px solid #000;border-right:1px solid #000;border-bottom:1px solid #000;background:#d4d0c8"></div>
<div class="vl" style="left:1249px;top:753px;height:186px;background:#fff"></div>
<div class="hl" style="left:77px;top:938px;width:1173px;background:#fff"></div>
<div class="hl" style="left:1190px;top:765px;width:5px;background:#000"></div>
<div class="ax" style="left:1196px;top:758px">200</div>
<div class="hl" style="left:1190px;top:802px;width:5px;background:#000"></div>
<div class="ax" style="left:1196px;top:795px">150</div>
<div class="hl" style="left:1190px;top:839px;width:5px;background:#000"></div>
<div class="ax" style="left:1196px;top:832px">100</div>
<div class="hl" style="left:1190px;top:875px;width:5px;background:#000"></div>
<div class="ax" style="left:1196px;top:868px">50</div>
<div class="hl" style="left:1190px;top:912px;width:5px;background:#000"></div>
<div class="ax" style="left:1196px;top:905px">0</div>
<div class="a" style="left:1189px;top:774px;width:59px;height:16px;background:#ffffe1;border-top:1px solid #000;border-bottom:1px solid #000"></div>
<div class="ax" style="left:1189px;top:775px;width:59px;text-align:center">178</div>
<div class="t" style="left:78px;top:754px;letter-spacing:-0.2px">Osc 5,35</div>
<div class="a" style="left:77px;top:921px;width:1112px;height:16px;background:#d4d0c8;border-left:1px solid #000;border-right:2px solid #000"></div>
<div class="tb " style="left:79px;top:921px;width:16px;height:15px;"><svg width="14" height="13"><path d="M9 2.500v8l-4.500-4z" fill="#000"/></svg></div>
<div class="tb " style="left:96px;top:921px;width:16px;height:15px;"><svg width="14" height="13"><path d="M5 2.500v8l4.500-4z" fill="#000"/></svg></div>
<div class="a" style="left:77px;top:942px;width:1111px;height:20px;background:#d4d0c8;border-left:2px solid #000;border-top:1px solid #000;border-bottom:1px solid #000;border-right:1px solid #000"></div>
<div class="hl" style="left:0px;top:963px;width:1280px;background:#fff"></div><div class="hl" style="left:1251px;top:962px;width:29px;background:#808080"></div><div class="hl" style="left:0px;top:966px;width:1266px;background:#a0a0a0"></div>
<div class="vl" style="left:192px;top:944px;height:17px;background:#000"></div>
<div class="t" style="left:194px;top:945px">Dec</div>
<div class="vl" style="left:332px;top:944px;height:17px;background:#000"></div>
<div class="t" style="left:334px;top:945px">2024</div>
<div class="vl" style="left:479px;top:944px;height:17px;background:#000"></div>
<div class="t" style="left:481px;top:945px">Feb</div>
<div class="vl" style="left:619px;top:944px;height:17px;background:#000"></div>
<div class="t" style="left:621px;top:945px">Mar</div>
<div class="vl" style="left:759px;top:944px;height:17px;background:#000"></div>
<div class="t" style="left:761px;top:945px">Apr</div>
<div class="a" style="left:1005px;top:944px;width:55px;height:16px;background:#ffffe1;border:1px solid #000"></div>
<div class="t" style="left:1005px;top:944px;width:55px;text-align:center">05/24/24</div>
<div class="a" style="left:1188px;top:942px;width:62px;height:21px;background:#ffffe1;border-top:1px solid #000;border-bottom:1px solid #fff;border-right:1px solid #fff"></div>
<div class="t" style="left:1189px;top:944px;width:60px;text-align:center;color:#00f">#3038</div>
<svg id="cs" width="1280" height="983" viewBox="0 0 1280 983"><defs><clipPath id="cm"><rect x="78" y="97" width="1110" height="652"/></clipPath><clipPath id="co"><rect x="78" y="754" width="1110" height="166"/></clipPath></defs><g fill="#000" shape-rendering="crispEdges"><rect x="1190" y="115" width="1" height="1"/><rect x="1190" y="121" width="3" height="1"/><rect x="1190" y="127" width="1" height="1"/><rect x="1190" y="132" width="1" height="1"/><rect x="1190" y="138" width="1" height="1"/><rect x="1190" y="144" width="1" height="1"/><rect x="1190" y="149" width="3" height="1"/><rect x="1190" y="155" width="1" height="1"/><rect x="1190" y="161" width="1" height="1"/><rect x="1190" y="166" width="1" height="1"/><rect x="1190" y="172" width="1" height="1"/><rect x="1190" y="177" width="3" height="1"/><rect x="1190" y="183" width="1" height="1"/><rect x="1190" y="189" width="1" height="1"/><rect x="1190" y="194" width="1" height="1"/><rect x="1190" y="200" width="1" height="1"/><rect x="1190" y="206" width="3" height="1"/><rect x="1190" y="211" width="1" height="1"/><rect x="1190" y="217" width="1" height="1"/><rect x="1190" y="223" width="1" height="1"/><rect x="1190" y="228" width="1" height="1"/><rect x="1190" y="234" width="3" height="1"/><rect x="1190" y="240" width="1" height="1"/><rect x="1190" y="245" width="1" height="1"/><rect x="1190" y="251" width="1" height="1"/><rect x="1190" y="256" width="1" height="1"/><rect x="1190" y="262" width="3" height="1"/><rect x="1190" y="268" width="1" height="1"/><rect x="1190" y="273" width="1" height="1"/><rect x="1190" y="279" width="1" height="1"/><rect x="1190" y="285" width="1" height="1"/><rect x="1190" y="290" width="3" height="1"/><rect x="1190" y="296" width="1" height="1"/><rect x="1190" y="302" width="1" height="1"/><rect x="1190" y="307" width="1" height="1"/><rect x="1190" y="313" width="1" height="1"/><rect x="1190" y="319" width="3" height="1"/><rect x="1190" y="324" width="1" height="1"/><rect x="1190" y="330" width="1" height="1"/><rect x="1190" y="336" width="1" height="1"/><rect x="1190" y="341" width="1" height="1"/><rect x="1190" y="347" width="3" height="1"/><rect x="1190" y="352" width="1" height="1"/><rect x="1190" y="358" width="1" height="1"/><rect x="1190" y="364" width="1" height="1"/><rect x="1190" y="369" width="1" height="1"/><rect x="1190" y="375" width="3" height="1"/><rect x="1190" y="381" width="1" height="1"/><rect x="1190" y="386" width="1" height="1"/><rect x="1190" y="392" width="1" height="1"/><rect x="1190" y="398" width="1" height="1"/><rect x="1190" y="403" width="3" height="1"/><rect x="1190" y="409" width="1" height="1"/><rect x="1190" y="415" width="1" height="1"/><rect x="1190" y="420" width="1" height="1"/><rect x="1190" y="426" width="1" height="1"/><rect x="1190" y="431" width="3" height="1"/><rect x="1190" y="437" width="1" height="1"/><rect x="1190" y="443" width="1" height="1"/><rect x="1190" y="448" width="1" height="1"/><rect x="1190" y="454" width="1" height="1"/><rect x="1190" y="460" width="3" height="1"/><rect x="1190" y="465" width="1" height="1"/><rect x="1190" y="471" width="1" height="1"/><rect x="1190" y="477" width="1" height="1"/><rect x="1190" y="482" width="1" height="1"/><rect x="1190" y="488" width="3" height="1"/><rect x="1190" y="494" width="1" height="1"/><rect x="1190" y="499" width="1" height="1"/><rect x="1190" y="505" width="1" height="1"/><rect x="1190" y="511" width="1" height="1"/><rect x="1190" y="516" width="3" height="1"/><rect x="1190" y="522" width="1" height="1"/><rect x="1190" y="527" width="1" height="1"/><rect x="1190" y="533" width="1" height="1"/><rect x="1190" y="539" width="1" height="1"/><rect x="1190" y="544" width="3" height="1"/><rect x="1190" y="550" width="1" height="1"/><rect x="1190" y="556" width="1" height="1"/><rect x="1190" y="561" width="1" height="1"/><rect x="1190" y="567" width="1" height="1"/><rect x="1190" y="573" width="3" height="1"/><rect x="1190" y="578" width="1" height="1"/><rect x="1190" y="584" width="1" height="1"/><rect x="1190" y="590" width="1" height="1"/><rect x="1190" y="595" width="1" height="1"/><rect x="1190" y="601" width="3" height="1"/><rect x="1190" y="606" width="1" height="1"/><rect x="1190" y="612" width="1" height="1"/><rect x="1190" y="618" width="1" height="1"/><rect x="1190" y="623" width="1" height="1"/><rect x="1190" y="629" width="3" height="1"/><rect x="1190" y="635" width="1" height="1"/><rect x="1190" y="640" width="1" height="1"/><rect x="1190" y="646" width="1" height="1"/><rect x="1190" y="652" width="1" height="1"/><rect x="1190" y="657" width="3" height="1"/><rect x="1190" y="663" width="1" height="1"/><rect x="1190" y="669" width="1" height="1"/><rect x="1190" y="674" width="1" height="1"/><rect x="1190" y="680" width="1" height="1"/><rect x="1190" y="686" width="3" height="1"/><rect x="1190" y="691" width="1" height="1"/><rect x="1190" y="697" width="1" height="1"/><rect x="1190" y="702" width="1" height="1"/><rect x="1190" y="708" width="1" height="1"/><rect x="1190" y="714" width="3" height="1"/><rect x="1190" y="719" width="1" height="1"/><rect x="1190" y="725" width="1" height="1"/><rect x="1190" y="731" width="1" height="1"/><rect x="1190" y="736" width="1" height="1"/><rect x="1190" y="742" width="3" height="1"/><rect x="1190" y="772" width="1" height="1"/><rect x="1190" y="769" width="1" height="1"/><rect x="1190" y="761" width="1" height="1"/><rect x="1190" y="758" width="1" height="1"/><rect x="1190" y="809" width="1" height="1"/><rect x="1190" y="806" width="1" height="1"/><rect x="1190" y="798" width="1" height="1"/><rect x="1190" y="795" width="1" height="1"/><rect x="1190" y="791" width="1" height="1"/><rect x="1190" y="769" width="1" height="1"/><rect x="1190" y="846" width="1" height="1"/><rect x="1190" y="843" width="1" height="1"/><rect x="1190" y="835" width="1" height="1"/><rect x="1190" y="832" width="1" height="1"/><rect x="1190" y="828" width="1" height="1"/><rect x="1190" y="824" width="1" height="1"/><rect x="1190" y="821" width="3" height="1"/><rect x="1190" y="817" width="1" height="1"/><rect x="1190" y="813" width="1" height="1"/><rect x="1190" y="810" width="1" height="1"/><rect x="1190" y="806" width="1" height="1"/><rect x="1190" y="882" width="1" height="1"/><rect x="1190" y="879" width="1" height="1"/><rect x="1190" y="871" width="1" height="1"/><rect x="1190" y="868" width="1" height="1"/><rect x="1190" y="864" width="1" height="1"/><rect x="1190" y="860" width="1" height="1"/><rect x="1190" y="857" width="3" height="1"/><rect x="1190" y="853" width="1" height="1"/><rect x="1190" y="849" width="1" height="1"/><rect x="1190" y="846" width="1" height="1"/><rect x="1190" y="842" width="1" height="1"/><rect x="1190" y="916" width="1" height="1"/><rect x="1190" y="908" width="1" height="1"/><rect x="1190" y="905" width="1" height="1"/><rect x="1190" y="901" width="1" height="1"/><rect x="1190" y="897" width="1" height="1"/><rect x="1190" y="894" width="3" height="1"/><rect x="1190" y="890" width="1" height="1"/><rect x="1190" y="886" width="1" height="1"/><rect x="1190" y="883" width="1" height="1"/><rect x="1190" y="879" width="1" height="1"/></g>
<g clip-path="url(#cm)" shape-rendering="crispEdges">
<path d="M80.8 737.6 L141.8 729.5 L218.6 718.8 L265.5 710.0 L300.0 700.8 L376.6 684.4 L453.0 667.0 L529.7 646.0 L606.3 623.0 L682.8 596.3 L766.3 570.7 L767.5 570.3" fill="none" stroke="#00ffff" stroke-width="1" stroke-linejoin="round" />
<path d="M80.8 711.3 L160.5 699.0 L218.6 688.8 L265.5 674.8 L300.0 664.0 L434.0 621.0 L491.4 602.0 L568.0 575.0 L625.4 554.0 L682.8 533.0 L721.0 517.8 L766.3 501.4 L767.5 501.0" fill="none" stroke="#2020f8" stroke-width="1.2" stroke-linejoin="round" />
<path d="M198.0 748.0 L218.6 739.4 L246.8 725.4 L271.0 708.5 L293.6 693.5 L318.0 677.6 L349.8 663.3 L434.0 621.0 L491.4 586.7 L529.0 561.6 L568.0 538.9 L625.4 498.7 L682.8 466.0 L721.0 441.0 L766.3 415.0 L767.5 414.3" fill="none" stroke="#208c94" stroke-width="1" stroke-linejoin="round" />
<path d="M80.8 620.4 L93.0 620.4 L106.0 615.7 L125.0 594.0 L149.0 567.0 L160.5 547.5 L175.5 519.4 L190.5 498.8 L205.5 487.5 L220.5 476.0 L246.8 455.6 L265.5 438.8 L284.0 421.9 L303.0 404.0 L307.5 397.8 L322.5 385.6 L337.5 376.0 L352.5 367.0 L367.5 355.6 L382.5 348.0 L395.6 345.0 L414.4 343.4 L427.5 335.0 L442.5 327.5 L458.8 320.0 L477.5 306.9 L496.0 288.0 L515.0 267.5 L530.0 253.4 L545.0 243.0 L560.0 231.9 L578.8 218.8 L597.5 201.9 L616.0 186.9 L635.0 175.6 L653.8 163.4 L672.5 151.0 L691.0 140.0 L710.0 126.9 L728.8 113.8 L747.5 102.5 L755.0 98.8 L760.6 97.8" fill="none" stroke="#909090" stroke-width="2" stroke-linejoin="round" />
<path d="M125.8 748.0 L141.8 729.0 L160.5 697.0 L175.5 676.6 L190.5 658.0 L209.0 643.0 L228.0 630.0 L246.8 613.0 L265.5 598.0 L284.0 581.0 L303.0 566.5 L308.0 561.6 L326.8 547.5 L345.5 534.4 L364.0 524.0 L383.0 513.8 L401.8 510.0 L416.8 507.0 L439.0 496.0 L458.0 485.6 L469.0 481.0 L486.0 466.9 L505.0 450.0 L514.0 442.5 L529.0 430.0 L548.0 412.5 L563.8 401.0 L590.0 383.0 L608.8 370.0 L627.5 358.0 L646.0 346.0 L665.0 335.0 L680.0 327.5 L687.5 321.9 L702.5 310.6 L715.0 301.9 L727.5 294.4 L740.0 288.0 L752.5 281.0 L760.0 278.0 L766.9 277.5 L768.1 277.4" fill="none" stroke="#a0a0a0" stroke-width="2" stroke-linejoin="round" />
<path d="M166.0 748.0 L173.6 721.6 L183.0 688.0 L190.5 674.8 L209.0 648.5 L220.5 628.0 L228.0 607.0 L241.0 582.0 L254.0 588.0 L271.0 589.0 L275.8 590.4 L293.6 583.8 L303.0 580.0 L310.0 573.8 L330.5 555.0 L345.5 532.5 L356.8 510.0 L370.0 487.5 L381.0 470.6 L392.4 466.9 L405.5 465.0 L420.5 467.0 L435.5 470.6 L448.6 478.0 L463.6 484.7 L472.0 481.9 L482.4 468.8 L493.6 455.6 L514.0 445.0 L529.0 438.8 L538.6 418.0 L548.0 399.4 L571.0 374.4 L586.0 370.6 L605.0 359.4 L612.5 344.4 L623.8 337.8 L640.6 323.8 L655.0 318.8 L668.8 317.5 L675.0 310.0 L685.0 300.0 L696.0 291.0 L702.5 280.0 L710.0 265.6 L715.0 268.8 L725.0 268.8 L733.8 264.4 L742.5 256.0 L752.5 251.9 L760.0 250.6 L766.9 248.0 L768.1 247.5" fill="none" stroke="#000" stroke-width="1" stroke-linejoin="round" />
<path d="M80.8 623.8 L87.0 623.8 L96.8 609.0 L102.4 599.8 L110.0 573.8 L121.0 551.0 L134.0 536.0 L147.4 521.0 L158.6 514.7 L171.8 510.0 L181.0 507.0 L190.5 498.8 L198.0 497.0 L209.0 498.4 L220.5 496.0 L228.0 491.0 L237.4 478.0 L246.8 465.0 L256.0 437.0 L265.5 423.8 L276.8 407.8 L284.0 411.6 L293.6 405.0 L303.0 395.6 L309.0 387.5 L318.8 383.8 L328.0 386.6 L335.6 395.0 L341.8 403.0 L349.0 412.5 L355.0 411.0 L364.0 403.0 L369.0 396.0 L378.8 387.5 L390.0 382.8 L401.0 383.8 L410.6 381.9 L418.0 368.8 L427.5 353.8 L438.8 340.6 L450.0 325.6 L457.5 312.5 L465.0 306.9 L470.6 312.5 L477.0 310.0 L483.0 305.0 L496.0 292.0 L505.6 276.9 L515.0 265.6 L528.0 250.6 L535.6 255.0 L545.0 251.6 L552.5 247.8 L561.9 255.0 L571.0 255.0 L575.0 241.0 L584.4 224.4 L597.5 215.0 L608.8 213.0 L621.9 196.0 L640.6 192.5 L648.0 182.0 L661.0 181.0 L674.4 166.0 L681.9 166.0 L691.0 171.0 L698.8 169.0 L708.0 155.0 L715.6 138.0 L725.0 129.7 L738.0 129.7 L749.4 118.4 L758.8 115.6 L766.0 121.0 L767.2 121.9" fill="none" stroke="#ff8000" stroke-width="1" stroke-linejoin="round" />
<path d="M80.8 692.6 L87.0 692.6 L96.8 678.5 L106.0 661.6 L115.5 635.4 L126.8 618.5 L139.9 603.5 L156.8 585.7 L169.9 582.0 L183.0 579.0 L194.0 570.7 L201.8 568.8 L209.0 572.8 L218.0 570.0 L228.0 558.8 L237.4 549.4 L246.8 532.5 L254.0 513.8 L265.5 498.8 L275.0 483.8 L279.6 482.8 L286.0 485.6 L295.5 477.0 L303.0 470.6 L312.4 461.0 L317.4 458.4 L326.8 459.4 L336.0 470.6 L351.0 488.4 L364.0 478.0 L375.5 465.0 L388.6 457.5 L398.0 461.0 L403.6 464.0 L413.0 452.0 L420.5 437.0 L430.0 425.6 L443.0 411.6 L453.8 397.8 L458.0 393.0 L464.4 384.7 L473.8 395.0 L486.9 378.0 L501.9 361.0 L515.0 344.4 L528.0 329.4 L537.5 339.7 L552.5 327.5 L561.9 333.0 L570.0 335.0 L576.9 320.0 L586.0 303.0 L599.4 293.8 L608.0 291.0 L618.0 278.8 L627.5 269.4 L635.0 275.0 L640.0 273.8 L646.0 263.8 L662.5 263.0 L667.5 255.0 L676.0 248.0 L681.0 246.9 L690.0 253.0 L697.5 250.0 L705.0 242.5 L712.5 226.0 L717.5 218.8 L725.0 212.5 L732.5 211.0 L737.5 213.0 L745.0 206.0 L752.5 200.0 L757.0 198.0 L766.9 204.8 L768.1 205.6" fill="none" stroke="#ff8000" stroke-width="1" stroke-linejoin="round" />
<path d="M80.8 601.6 L87.4 601.6 L93.0 596.0 L101.4 590.4 L106.0 581.0 L113.6 566.0 L134.0 513.8 L151.0 485.6 L157.7 481.9 L171.8 486.6 L184.9 492.8 L194.0 488.4 L201.8 487.0 L216.8 487.5 L222.0 489.4 L228.0 494.6 L239.0 496.5 L247.0 490.0 L258.0 465.0 L284.0 421.0 L301.0 397.8 L315.0 381.9 L331.9 374.0 L345.0 379.0 L352.5 385.6 L367.5 393.0 L378.8 397.8 L390.0 396.9 L408.8 396.0 L415.0 385.6 L427.5 371.6 L436.9 363.0 L446.0 350.0 L453.8 336.9 L465.0 319.0 L472.5 317.0 L477.5 314.4 L486.9 303.0 L496.0 297.5 L505.6 282.5 L515.0 275.0 L526.0 257.0 L533.8 257.0 L545.0 259.0 L556.0 255.0 L569.4 255.0 L578.8 238.4 L588.0 230.0 L601.0 221.6 L610.6 221.6 L621.9 209.4 L629.4 206.6 L638.8 204.7 L648.0 194.4 L659.4 189.7 L668.8 180.0 L680.0 174.7 L695.0 173.8 L706.0 174.7 L715.6 166.0 L723.0 153.0 L732.5 148.4 L741.9 144.7 L751.0 135.0 L760.6 129.7 L766.0 129.7 L767.2 129.7" fill="none" stroke="#802020" stroke-width="1" stroke-linejoin="round" />
<path d="M80.8 693.0 L96.8 690.4 L111.8 683.0 L126.8 668.0 L141.8 649.0 L153.0 634.0 L164.0 615.4 L175.5 598.5 L186.8 583.5 L200.0 570.4 L213.0 561.0 L228.0 542.5 L246.8 525.6 L265.5 508.8 L284.0 495.6 L303.0 480.6 L308.0 477.8 L326.8 461.9 L345.5 450.6 L364.0 439.4 L383.0 429.0 L396.0 425.0 L413.0 422.5 L430.0 413.0 L448.6 402.8 L464.4 392.8 L477.5 382.5 L496.0 365.6 L515.0 350.6 L533.8 335.6 L552.5 320.6 L571.0 311.0 L590.0 294.4 L608.8 283.0 L616.0 272.8 L635.0 258.8 L653.8 246.6 L672.5 238.0 L691.0 229.7 L710.0 215.6 L728.8 202.5 L747.5 192.0 L766.0 185.0 L767.2 184.5" fill="none" stroke="#00ffff" stroke-width="1" stroke-linejoin="round" />
<path d="M80.8 702.5 L96.8 699.9 L111.8 692.5 L126.8 677.5 L141.8 658.5 L153.0 643.5 L164.0 624.9 L175.5 608.0 L186.8 593.0 L200.0 579.9 L213.0 570.5 L228.0 552.0 L246.8 535.1 L265.5 518.3 L284.0 505.1 L303.0 490.1 L308.0 487.3 L326.8 471.4 L345.5 460.1 L364.0 448.9 L383.0 438.5 L396.0 434.5 L413.0 432.0 L430.0 422.5 L448.6 412.3 L464.4 402.3 L477.5 392.0 L496.0 375.1 L515.0 360.1 L533.8 345.1 L552.5 330.1 L571.0 320.5 L590.0 303.9 L608.8 292.5 L616.0 282.3 L635.0 268.3 L653.8 256.1 L672.5 247.5 L691.0 239.2 L710.0 225.1 L728.8 212.0 L747.5 201.5 L766.0 194.5 L767.2 194.0" fill="none" stroke="#00ffff" stroke-width="1" stroke-linejoin="round" />
<path d="M80.8 697.0 L96.8 694.4 L111.8 687.0 L126.8 672.0 L141.8 653.0 L153.0 638.0 L164.0 619.4 L175.5 602.5 L186.8 587.5 L200.0 574.4 L213.0 565.0 L228.0 546.5 L246.8 529.6 L265.5 512.8 L284.0 499.6 L303.0 484.6 L308.0 481.8 L326.8 465.9 L345.5 454.6 L364.0 443.4 L383.0 433.0 L396.0 429.0 L413.0 426.5 L430.0 417.0 L448.6 406.8 L464.4 396.8 L477.5 386.5 L496.0 369.6 L515.0 354.6 L533.8 339.6 L552.5 324.6 L571.0 315.0 L590.0 298.4 L608.8 287.0 L616.0 276.8 L635.0 262.8 L653.8 250.6 L672.5 242.0 L691.0 233.7 L710.0 219.6 L728.8 206.5 L747.5 196.0 L766.0 189.0 L767.2 188.5" fill="none" stroke="#ffff00" stroke-width="1" stroke-linejoin="round" />
<path d="M80.8 699.0 L96.8 696.4 L111.8 689.0 L126.8 674.0 L141.8 655.0 L153.0 640.0 L164.0 621.4 L175.5 604.5 L186.8 589.5 L200.0 576.4 L213.0 567.0 L228.0 548.5 L246.8 531.6 L265.5 514.8 L284.0 501.6 L303.0 486.6 L308.0 483.8 L326.8 467.9 L345.5 456.6 L364.0 445.4 L383.0 435.0 L396.0 431.0 L413.0 428.5 L430.0 419.0 L448.6 408.8 L464.4 398.8 L477.5 388.5 L496.0 371.6 L515.0 356.6 L533.8 341.6 L552.5 326.6 L571.0 317.0 L590.0 300.4 L608.8 289.0 L616.0 278.8 L635.0 264.8 L653.8 252.6 L672.5 244.0 L691.0 235.7 L710.0 221.6 L728.8 208.5 L747.5 198.0 L766.0 191.0 L767.2 190.5" fill="none" stroke="#ffff00" stroke-width="1" stroke-linejoin="round" />
<path d="M80.8 698.0 L96.8 695.4 L111.8 688.0 L126.8 673.0 L141.8 654.0 L153.0 639.0 L164.0 620.4 L175.5 603.5 L186.8 588.5 L200.0 575.4 L213.0 566.0 L228.0 547.5 L246.8 530.6 L265.5 513.8 L284.0 500.6 L303.0 485.6 L308.0 482.8 L326.8 466.9 L345.5 455.6 L364.0 444.4 L383.0 434.0 L396.0 430.0 L413.0 427.5 L430.0 418.0 L448.6 407.8 L464.4 397.8 L477.5 387.5 L496.0 370.6 L515.0 355.6 L533.8 340.6 L552.5 325.6 L571.0 316.0 L590.0 299.4 L608.8 288.0 L616.0 277.8 L635.0 263.8 L653.8 251.6 L672.5 243.0 L691.0 234.7 L710.0 220.6 L728.8 207.5 L747.5 197.0 L766.0 190.0 L767.2 189.5" fill="none" stroke="#108050" stroke-width="1" stroke-linejoin="round" />
<path d="M80.8 560.0 L100.5 556.0 L115.5 547.5 L134.0 538.0 L153.0 528.8 L171.8 519.4 L190.5 510.0 L209.0 501.6 L228.0 492.0 L246.8 481.0 L265.5 467.0 L276.8 459.4 L284.0 454.0 L303.0 440.6 L319.0 427.5 L336.0 421.0 L355.0 414.4 L370.0 403.0 L392.0 392.0 L399.4 387.5 L412.5 381.0 L427.5 370.6 L446.0 357.5 L465.0 344.4 L477.5 336.9 L496.0 321.9 L515.0 306.9 L533.8 297.5 L552.5 285.0 L571.0 273.0 L590.0 259.0 L608.8 251.6 L627.5 231.9 L646.0 220.6 L653.8 215.0 L672.5 201.9 L691.0 191.6 L710.0 177.5 L728.8 163.4 L747.5 150.3 L766.0 139.0 L767.2 138.3" fill="none" stroke="#ff0000" stroke-width="1" stroke-linejoin="round" />
<path d="M80.8 652.9 L88.8 652.1 L98.0 637.2 L105.3 619.8 L112.6 600.7 L121.8 582.7 L131.0 569.2 L138.3 560.9 L149.3 552.2 L162.0 544.5 L175.5 539.6 L190.5 529.0 L205.5 528.4 L213.0 531.0 L228.0 519.0 L237.4 507.8 L246.8 489.0 L256.0 464.6 L265.5 454.0 L275.0 442.0 L280.5 447.0 L290.0 442.0 L303.0 431.0 L308.0 417.8 L319.0 414.0 L328.6 416.8 L340.0 429.0 L353.0 443.0 L360.5 434.6 L371.8 426.0 L383.0 418.7 L392.4 415.9 L401.8 422.4 L411.0 417.8 L420.5 397.0 L428.0 384.0 L440.0 364.6 L451.0 353.4 L464.4 340.0 L470.0 347.8 L483.0 336.5 L496.0 319.6 L505.6 308.4 L515.0 297.0 L522.5 287.8 L528.0 285.0 L535.6 291.5 L545.0 284.0 L554.4 281.0 L561.9 285.9 L569.4 288.7 L575.0 274.6 L582.5 259.6 L588.0 254.0 L597.5 251.0 L606.9 248.4 L616.0 237.0 L625.6 224.0 L635.0 227.8 L644.0 220.0 L653.8 216.5 L663.0 214.6 L672.5 202.4 L680.0 200.6 L691.0 205.0 L697.0 203.5 L700.0 200.1 L706.1 189.1 L712.2 178.2 L717.1 171.5 L724.4 165.4 L728.1 164.1 L731.7 164.1 L735.0 165.4 L741.5 162.3 L746.4 157.1 L751.9 152.2 L756.1 151.3 L760.4 151.6 L767.1 156.5 L768.3 157.4" fill="none" stroke="#ff00ff" stroke-width="1" stroke-linejoin="round" />
<path d="M80.8 666.1 L88.8 665.9 L98.0 652.6 L105.3 637.2 L112.6 619.5 L121.8 600.9 L131.0 585.0 L138.3 575.1 L149.3 565.4 L162.0 557.5 L175.5 552.6 L190.5 542.0 L205.5 541.4 L213.0 544.0 L228.0 532.0 L237.4 520.8 L246.8 502.0 L256.0 477.6 L265.5 467.0 L275.0 455.0 L280.5 460.0 L290.0 455.0 L303.0 444.0 L308.0 430.8 L319.0 427.0 L328.6 429.8 L340.0 442.0 L353.0 456.0 L360.5 447.6 L371.8 439.0 L383.0 431.7 L392.4 428.9 L401.8 435.4 L411.0 430.8 L420.5 410.0 L428.0 397.0 L440.0 377.6 L451.0 366.4 L464.4 353.0 L470.0 360.8 L483.0 349.5 L496.0 332.6 L505.6 321.4 L515.0 310.0 L522.5 300.8 L528.0 298.0 L535.6 304.5 L545.0 297.0 L554.4 294.0 L561.9 298.9 L569.4 301.7 L575.0 287.6 L582.5 272.6 L588.0 267.0 L597.5 264.0 L606.9 261.4 L616.0 250.0 L625.6 237.0 L635.0 240.8 L644.0 233.0 L653.8 229.5 L663.0 227.6 L672.5 215.4 L680.0 213.6 L691.0 218.0 L697.0 216.5 L700.0 213.1 L706.1 202.1 L712.2 191.2 L717.1 184.5 L724.4 178.4 L728.1 177.1 L731.7 177.1 L735.0 178.4 L741.5 175.3 L746.4 170.1 L751.9 165.2 L756.1 164.3 L760.4 164.6 L767.1 169.5 L768.3 170.4" fill="none" stroke="#ff00ff" stroke-width="1" stroke-linejoin="round" />
<path d="M80.8 659.0 L88.8 658.5 L98.0 644.4 L105.3 628.0 L112.6 609.6 L121.8 591.3 L131.0 576.6 L138.3 567.5 L149.3 558.3 L162.0 550.5 L175.5 545.6 L190.5 535.0 L205.5 534.4 L213.0 537.0 L228.0 525.0 L237.4 513.8 L246.8 495.0 L256.0 470.6 L265.5 460.0 L275.0 448.0 L280.5 453.0 L290.0 448.0 L303.0 437.0 L308.0 423.8 L319.0 420.0 L328.6 422.8 L340.0 435.0 L353.0 449.0 L360.5 440.6 L371.8 432.0 L383.0 424.7 L392.4 421.9 L401.8 428.4 L411.0 423.8 L420.5 403.0 L428.0 390.0 L440.0 370.6 L451.0 359.4 L464.4 346.0 L470.0 353.8 L483.0 342.5 L496.0 325.6 L505.6 314.4 L515.0 303.0 L522.5 293.8 L528.0 291.0 L535.6 297.5 L545.0 290.0 L554.4 287.0 L561.9 291.9 L569.4 294.7 L575.0 280.6 L582.5 265.6 L588.0 260.0 L597.5 257.0 L606.9 254.4 L616.0 243.0 L625.6 230.0 L635.0 233.8 L644.0 226.0 L653.8 222.5 L663.0 220.6 L672.5 208.4 L680.0 206.6 L691.0 211.0 L697.0 209.5 L700.0 206.1 L706.1 195.1 L712.2 184.2 L717.1 177.5 L724.4 171.4 L728.1 170.1 L731.7 170.1 L735.0 171.4 L741.5 168.3 L746.4 163.1 L751.9 158.2 L756.1 157.3 L760.4 157.6 L767.1 162.5 L768.3 163.4" fill="none" stroke="#00ff00" stroke-width="1" stroke-linejoin="round" />
<path d="M80.8 668.8 L96.8 667.3 L106.0 664.0 L125.0 655.3 L137.0 649.0 L149.0 642.0 L171.8 630.7 L194.0 620.4 L218.6 611.0 L241.0 599.8 L265.5 579.0 L286.0 567.0 L293.6 560.6 L308.0 550.3 L326.8 540.0 L345.5 530.6 L364.0 521.0 L383.0 511.9 L401.8 504.4 L420.5 495.0 L439.0 481.9 L458.0 468.8 L476.8 457.5 L495.5 444.4 L514.0 429.4 L533.0 417.0 L548.0 408.8 L563.8 397.8 L590.0 380.0 L608.8 366.9 L627.5 354.7 L646.0 342.5 L665.0 331.0 L677.5 322.5 L690.0 316.0 L702.5 307.5 L715.0 298.8 L727.5 290.0 L740.0 282.5 L752.5 274.4 L766.9 267.5 L768.1 266.9" fill="none" stroke="#000" stroke-width="2.4" stroke-linejoin="round" shape-rendering="auto"/>
<g shape-rendering="crispEdges"><rect x="80" y="634" width="1" height="7" fill="#00f"/><rect x="78" y="637" width="5" height="2" fill="#00f"/><rect x="87" y="632" width="1" height="28" fill="#00f"/><rect x="85" y="634" width="5" height="25" fill="#00f"/><rect x="94" y="618" width="1" height="2" fill="#00f"/><rect x="94" y="649" width="1" height="5" fill="#00f"/><rect x="92.5" y="620.5" width="4" height="28" fill="none" stroke="#00f" stroke-width="1"/><rect x="101" y="617" width="1" height="5" fill="#00f"/><rect x="101" y="626" width="1" height="5" fill="#00f"/><rect x="99.5" y="622.5" width="4" height="3" fill="none" stroke="#00f" stroke-width="1"/><rect x="108" y="568" width="1" height="7" fill="#00f"/><rect x="106.5" y="575.5" width="4" height="20" fill="none" stroke="#00f" stroke-width="1"/><rect x="115" y="561" width="1" height="13" fill="#00f"/><rect x="113" y="569" width="5" height="2" fill="#00f"/><rect x="122" y="565" width="1" height="3" fill="#00f"/><rect x="120.5" y="568.5" width="4" height="6" fill="none" stroke="#00f" stroke-width="1"/><rect x="129" y="561" width="1" height="2" fill="#00f"/><rect x="129" y="567" width="1" height="6" fill="#00f"/><rect x="127.5" y="563.5" width="4" height="3" fill="none" stroke="#00f" stroke-width="1"/><rect x="136" y="540" width="1" height="6" fill="#00f"/><rect x="134.5" y="546.5" width="4" height="18" fill="none" stroke="#00f" stroke-width="1"/><rect x="143" y="548" width="1" height="8" fill="#00f"/><rect x="141" y="550" width="5" height="2" fill="#00f"/><rect x="150" y="533" width="1" height="7" fill="#00f"/><rect x="150" y="543" width="1" height="3" fill="#00f"/><rect x="148.5" y="540.5" width="4" height="2" fill="none" stroke="#00f" stroke-width="1"/><rect x="157" y="538" width="1" height="1" fill="#00f"/><rect x="157" y="542" width="1" height="1" fill="#00f"/><rect x="155.5" y="539.5" width="4" height="2" fill="none" stroke="#00f" stroke-width="1"/><rect x="164" y="539" width="1" height="7" fill="#00f"/><rect x="162" y="542" width="5" height="2" fill="#00f"/><rect x="171" y="533" width="1" height="9" fill="#00f"/><rect x="171" y="547" width="1" height="1" fill="#00f"/><rect x="169.5" y="542.5" width="4" height="4" fill="none" stroke="#00f" stroke-width="1"/><rect x="178" y="522" width="1" height="24" fill="#00f"/><rect x="176" y="532" width="5" height="13" fill="#00f"/><rect x="185" y="533" width="1" height="1" fill="#00f"/><rect x="185" y="542" width="1" height="9" fill="#00f"/><rect x="183.5" y="534.5" width="4" height="7" fill="none" stroke="#00f" stroke-width="1"/><rect x="192" y="517" width="1" height="1" fill="#00f"/><rect x="192" y="539" width="1" height="1" fill="#00f"/><rect x="190.5" y="518.5" width="4" height="20" fill="none" stroke="#00f" stroke-width="1"/><rect x="199" y="532" width="1" height="1" fill="#00f"/><rect x="199" y="537" width="1" height="8" fill="#00f"/><rect x="197.5" y="533.5" width="4" height="3" fill="none" stroke="#00f" stroke-width="1"/><rect x="206" y="528" width="1" height="6" fill="#00f"/><rect x="206" y="541" width="1" height="2" fill="#00f"/><rect x="204.5" y="534.5" width="4" height="6" fill="none" stroke="#00f" stroke-width="1"/><rect x="213" y="521" width="1" height="25" fill="#00f"/><rect x="211" y="523" width="5" height="22" fill="#00f"/><rect x="220" y="521" width="1" height="4" fill="#00f"/><rect x="220" y="534" width="1" height="1" fill="#00f"/><rect x="218.5" y="525.5" width="4" height="8" fill="none" stroke="#00f" stroke-width="1"/><rect x="227" y="510" width="1" height="3" fill="#00f"/><rect x="227" y="530" width="1" height="1" fill="#00f"/><rect x="225.5" y="513.5" width="4" height="16" fill="none" stroke="#00f" stroke-width="1"/><rect x="234" y="502" width="1" height="1" fill="#00f"/><rect x="234" y="519" width="1" height="1" fill="#00f"/><rect x="232.5" y="503.5" width="4" height="15" fill="none" stroke="#00f" stroke-width="1"/><rect x="241" y="491" width="1" height="1" fill="#00f"/><rect x="241" y="505" width="1" height="6" fill="#00f"/><rect x="239.5" y="492.5" width="4" height="12" fill="none" stroke="#00f" stroke-width="1"/><rect x="248" y="454" width="1" height="2" fill="#00f"/><rect x="248" y="489" width="1" height="1" fill="#00f"/><rect x="246.5" y="456.5" width="4" height="32" fill="none" stroke="#00f" stroke-width="1"/><rect x="255" y="438" width="1" height="24" fill="#00f"/><rect x="253" y="448" width="5" height="2" fill="#00f"/><rect x="262" y="445" width="1" height="3" fill="#00f"/><rect x="262" y="452" width="1" height="5" fill="#00f"/><rect x="260.5" y="448.5" width="4" height="3" fill="none" stroke="#00f" stroke-width="1"/><rect x="269" y="432" width="1" height="5" fill="#00f"/><rect x="269" y="445" width="1" height="1" fill="#00f"/><rect x="267.5" y="437.5" width="4" height="7" fill="none" stroke="#00f" stroke-width="1"/><rect x="276" y="420" width="1" height="1" fill="#00f"/><rect x="276" y="435" width="1" height="1" fill="#00f"/><rect x="274.5" y="421.5" width="4" height="13" fill="none" stroke="#00f" stroke-width="1"/><rect x="283" y="415" width="1" height="46" fill="#00f"/><rect x="281" y="423" width="5" height="38" fill="#00f"/><rect x="290" y="431" width="1" height="2" fill="#00f"/><rect x="290" y="446" width="1" height="8" fill="#00f"/><rect x="288.5" y="433.5" width="4" height="12" fill="none" stroke="#00f" stroke-width="1"/><rect x="297" y="418" width="1" height="20" fill="#00f"/><rect x="295" y="428" width="5" height="2" fill="#00f"/><rect x="304" y="412" width="1" height="6" fill="#00f"/><rect x="304" y="427" width="1" height="1" fill="#00f"/><rect x="302.5" y="418.5" width="4" height="8" fill="none" stroke="#00f" stroke-width="1"/><rect x="311" y="412" width="1" height="1" fill="#00f"/><rect x="311" y="418" width="1" height="2" fill="#00f"/><rect x="309.5" y="413.5" width="4" height="4" fill="none" stroke="#00f" stroke-width="1"/><rect x="318" y="407" width="1" height="6" fill="#00f"/><rect x="316" y="412" width="5" height="2" fill="#00f"/><rect x="325" y="411" width="1" height="17" fill="#00f"/><rect x="323" y="412" width="5" height="9" fill="#00f"/><rect x="332" y="428" width="1" height="18" fill="#00f"/><rect x="330" y="434" width="5" height="2" fill="#00f"/><rect x="339" y="442" width="1" height="16" fill="#00f"/><rect x="337" y="445" width="5" height="13" fill="#00f"/><rect x="346" y="444" width="1" height="22" fill="#00f"/><rect x="344" y="460" width="5" height="6" fill="#00f"/><rect x="353" y="448" width="1" height="13" fill="#00f"/><rect x="353" y="465" width="1" height="4" fill="#00f"/><rect x="351.5" y="461.5" width="4" height="3" fill="none" stroke="#00f" stroke-width="1"/><rect x="360" y="422" width="1" height="1" fill="#00f"/><rect x="360" y="458" width="1" height="1" fill="#00f"/><rect x="358.5" y="423.5" width="4" height="34" fill="none" stroke="#00f" stroke-width="1"/><rect x="367" y="423" width="1" height="5" fill="#00f"/><rect x="367" y="436" width="1" height="6" fill="#00f"/><rect x="365.5" y="428.5" width="4" height="7" fill="none" stroke="#00f" stroke-width="1"/><rect x="374" y="409" width="1" height="3" fill="#00f"/><rect x="374" y="426" width="1" height="1" fill="#00f"/><rect x="372.5" y="412.5" width="4" height="13" fill="none" stroke="#00f" stroke-width="1"/><rect x="381" y="404" width="1" height="32" fill="#00f"/><rect x="379" y="408" width="5" height="7" fill="#00f"/><rect x="388" y="402" width="1" height="18" fill="#00f"/><rect x="386" y="408" width="5" height="4" fill="#00f"/><rect x="395" y="413" width="1" height="19" fill="#00f"/><rect x="393" y="419" width="5" height="4" fill="#00f"/><rect x="402" y="434" width="1" height="16" fill="#00f"/><rect x="400" y="437" width="5" height="2" fill="#00f"/><rect x="409" y="409" width="1" height="4" fill="#00f"/><rect x="409" y="427" width="1" height="9" fill="#00f"/><rect x="407.5" y="413.5" width="4" height="13" fill="none" stroke="#00f" stroke-width="1"/><rect x="416" y="380" width="1" height="1" fill="#00f"/><rect x="416" y="405" width="1" height="5" fill="#00f"/><rect x="414.5" y="381.5" width="4" height="23" fill="none" stroke="#00f" stroke-width="1"/><rect x="423" y="365" width="1" height="12" fill="#00f"/><rect x="421" y="372" width="5" height="4" fill="#00f"/><rect x="430" y="366" width="1" height="1" fill="#00f"/><rect x="430" y="372" width="1" height="5" fill="#00f"/><rect x="428.5" y="367.5" width="4" height="4" fill="none" stroke="#00f" stroke-width="1"/><rect x="437" y="345" width="1" height="20" fill="#00f"/><rect x="435" y="353" width="5" height="12" fill="#00f"/><rect x="444" y="348" width="1" height="2" fill="#00f"/><rect x="444" y="355" width="1" height="8" fill="#00f"/><rect x="442.5" y="350.5" width="4" height="4" fill="none" stroke="#00f" stroke-width="1"/><rect x="451" y="343" width="1" height="14" fill="#00f"/><rect x="449" y="353" width="5" height="2" fill="#00f"/><rect x="458" y="330" width="1" height="1" fill="#00f"/><rect x="458" y="351" width="1" height="3" fill="#00f"/><rect x="456.5" y="331.5" width="4" height="19" fill="none" stroke="#00f" stroke-width="1"/><rect x="465" y="329" width="1" height="9" fill="#00f"/><rect x="463" y="332" width="5" height="2" fill="#00f"/><rect x="472" y="342" width="1" height="38" fill="#00f"/><rect x="470" y="347" width="5" height="31" fill="#00f"/><rect x="479" y="342" width="1" height="1" fill="#00f"/><rect x="479" y="370" width="1" height="2" fill="#00f"/><rect x="477.5" y="343.5" width="4" height="26" fill="none" stroke="#00f" stroke-width="1"/><rect x="486" y="304" width="1" height="10" fill="#00f"/><rect x="486" y="338" width="1" height="3" fill="#00f"/><rect x="484.5" y="314.5" width="4" height="23" fill="none" stroke="#00f" stroke-width="1"/><rect x="493" y="315" width="1" height="21" fill="#00f"/><rect x="491" y="315" width="5" height="8" fill="#00f"/><rect x="500" y="313" width="1" height="3" fill="#00f"/><rect x="500" y="319" width="1" height="8" fill="#00f"/><rect x="498.5" y="316.5" width="4" height="2" fill="none" stroke="#00f" stroke-width="1"/><rect x="507" y="290" width="1" height="2" fill="#00f"/><rect x="507" y="306" width="1" height="1" fill="#00f"/><rect x="505.5" y="292.5" width="4" height="13" fill="none" stroke="#00f" stroke-width="1"/><rect x="514" y="290" width="1" height="8" fill="#00f"/><rect x="512" y="291" width="5" height="2" fill="#00f"/><rect x="521" y="273" width="1" height="2" fill="#00f"/><rect x="521" y="288" width="1" height="1" fill="#00f"/><rect x="519.5" y="275.5" width="4" height="12" fill="none" stroke="#00f" stroke-width="1"/><rect x="528" y="263" width="1" height="18" fill="#00f"/><rect x="526" y="275" width="5" height="4" fill="#00f"/><rect x="535" y="307" width="1" height="28" fill="#00f"/><rect x="533" y="308" width="5" height="9" fill="#00f"/><rect x="542" y="289" width="1" height="1" fill="#00f"/><rect x="542" y="304" width="1" height="10" fill="#00f"/><rect x="540.5" y="290.5" width="4" height="13" fill="none" stroke="#00f" stroke-width="1"/><rect x="549" y="272" width="1" height="2" fill="#00f"/><rect x="549" y="288" width="1" height="1" fill="#00f"/><rect x="547.5" y="274.5" width="4" height="13" fill="none" stroke="#00f" stroke-width="1"/><rect x="556" y="268" width="1" height="22" fill="#00f"/><rect x="554" y="273" width="5" height="14" fill="#00f"/><rect x="563" y="294" width="1" height="21" fill="#00f"/><rect x="561" y="296" width="5" height="8" fill="#00f"/><rect x="570" y="300" width="1" height="1" fill="#00f"/><rect x="570" y="312" width="1" height="9" fill="#00f"/><rect x="568.5" y="301.5" width="4" height="10" fill="none" stroke="#00f" stroke-width="1"/><rect x="577" y="238" width="1" height="3" fill="#00f"/><rect x="577" y="268" width="1" height="1" fill="#00f"/><rect x="575.5" y="241.5" width="4" height="26" fill="none" stroke="#00f" stroke-width="1"/><rect x="584" y="228" width="1" height="15" fill="#00f"/><rect x="582" y="233" width="5" height="7" fill="#00f"/><rect x="591" y="235" width="1" height="17" fill="#00f"/><rect x="589" y="238" width="5" height="14" fill="#00f"/><rect x="598" y="245" width="1" height="1" fill="#00f"/><rect x="598" y="249" width="1" height="8" fill="#00f"/><rect x="596.5" y="246.5" width="4" height="2" fill="none" stroke="#00f" stroke-width="1"/><rect x="605" y="247" width="1" height="9" fill="#00f"/><rect x="603" y="251" width="5" height="2" fill="#00f"/><rect x="612" y="231" width="1" height="6" fill="#00f"/><rect x="612" y="242" width="1" height="12" fill="#00f"/><rect x="610.5" y="237.5" width="4" height="4" fill="none" stroke="#00f" stroke-width="1"/><rect x="619" y="211" width="1" height="2" fill="#00f"/><rect x="619" y="235" width="1" height="1" fill="#00f"/><rect x="617.5" y="213.5" width="4" height="21" fill="none" stroke="#00f" stroke-width="1"/><rect x="626" y="206" width="1" height="11" fill="#00f"/><rect x="624" y="215" width="5" height="2" fill="#00f"/><rect x="633" y="226" width="1" height="31" fill="#00f"/><rect x="631" y="228" width="5" height="18" fill="#00f"/><rect x="640" y="218" width="1" height="20" fill="#00f"/><rect x="638" y="229" width="5" height="2" fill="#00f"/><rect x="647" y="197" width="1" height="5" fill="#00f"/><rect x="647" y="216" width="1" height="1" fill="#00f"/><rect x="645.5" y="202.5" width="4" height="13" fill="none" stroke="#00f" stroke-width="1"/><rect x="654" y="183" width="1" height="40" fill="#00f"/><rect x="652" y="197" width="5" height="24" fill="#00f"/><rect x="661" y="220" width="1" height="4" fill="#00f"/><rect x="661" y="228" width="1" height="10" fill="#00f"/><rect x="659.5" y="224.5" width="4" height="3" fill="none" stroke="#00f" stroke-width="1"/><rect x="668" y="189" width="1" height="3" fill="#00f"/><rect x="668" y="214" width="1" height="11" fill="#00f"/><rect x="666.5" y="192.5" width="4" height="21" fill="none" stroke="#00f" stroke-width="1"/><rect x="675" y="189" width="1" height="16" fill="#00f"/><rect x="673" y="192" width="5" height="6" fill="#00f"/><rect x="682" y="190" width="1" height="31" fill="#00f"/><rect x="680" y="191" width="5" height="15" fill="#00f"/><rect x="689" y="213" width="1" height="18" fill="#00f"/><rect x="687" y="221" width="5" height="4" fill="#00f"/><rect x="696" y="191" width="1" height="17" fill="#00f"/><rect x="694" y="203" width="5" height="4" fill="#00f"/><rect x="703" y="187" width="1" height="2" fill="#00f"/><rect x="703" y="212" width="1" height="4" fill="#00f"/><rect x="701.5" y="189.5" width="4" height="22" fill="none" stroke="#00f" stroke-width="1"/><rect x="710" y="162" width="1" height="1" fill="#00f"/><rect x="710" y="188" width="1" height="4" fill="#00f"/><rect x="708.5" y="163.5" width="4" height="24" fill="none" stroke="#00f" stroke-width="1"/><rect x="717" y="143" width="1" height="13" fill="#00f"/><rect x="715" y="147" width="5" height="8" fill="#00f"/><rect x="724" y="150" width="1" height="10" fill="#00f"/><rect x="722" y="152" width="5" height="7" fill="#00f"/><rect x="731" y="161" width="1" height="6" fill="#00f"/><rect x="729" y="165" width="5" height="2" fill="#00f"/><rect x="738" y="157" width="1" height="20" fill="#00f"/><rect x="736" y="161" width="5" height="15" fill="#00f"/><rect x="745" y="149" width="1" height="1" fill="#00f"/><rect x="745" y="162" width="1" height="7" fill="#00f"/><rect x="743.5" y="150.5" width="4" height="11" fill="none" stroke="#00f" stroke-width="1"/><rect x="752" y="141" width="1" height="6" fill="#00f"/><rect x="752" y="150" width="1" height="1" fill="#00f"/><rect x="750.5" y="147.5" width="4" height="2" fill="none" stroke="#00f" stroke-width="1"/><rect x="759" y="141" width="1" height="20" fill="#00f"/><rect x="757" y="145" width="5" height="9" fill="#00f"/><rect x="766" y="174" width="1" height="12" fill="#00f"/><rect x="764" y="174" width="5" height="2" fill="#00f"/></g>
<path d="M171.4 455.6V481.0 M164.9 466.0L171.4 481.0L177.9 466.0" fill="none" stroke="#008080" stroke-width="1"/>
<path d="M199.5 456.6V482.0 M193.0 467.0L199.5 482.0L206.0 467.0" fill="none" stroke="#008080" stroke-width="1"/>
<path d="M206.4 455.6V481.0 M199.9 466.0L206.4 481.0L212.9 466.0" fill="none" stroke="#ff00ff" stroke-width="1"/>
<path d="M262.5 360.3V386.6 M256.0 372.1L262.5 386.6L269.0 372.1" fill="none" stroke="#ff00ff" stroke-width="1"/>
<path d="M353.4 339.7V366.0 M346.9 351.0L353.4 366.0L359.9 351.0" fill="none" stroke="#008080" stroke-width="1"/>
<path d="M381.6 336.0V362.0 M375.1 347.0L381.6 362.0L388.1 347.0" fill="none" stroke="#008080" stroke-width="1"/>
<path d="M388.5 337.8V363.0 M382.0 349.0L388.5 363.0L395.0 349.0" fill="none" stroke="#ff00ff" stroke-width="1"/>
<path d="M409.3 338.8V365.0 M402.8 351.5L409.3 365.0L415.8 351.5" fill="none" stroke="#ff00ff" stroke-width="1"/>
<path d="M500.4 278.8V304.0 M495.4 294.0L500.4 304.0L505.4 294.0" fill="none" stroke="#008080" stroke-width="1"/>
<path d="M626.6 182.8V207.5 M620.1 191.5L626.6 207.5L633.1 191.5" fill="none" stroke="#ff00ff" stroke-width="1"/>
<path d="M766.0 100.0V121.0 M759.7 110.5L766.0 121.0L772.3 110.5" fill="none" stroke="#ff00ff" stroke-width="1"/>
<path d="M213.0 483.8V510.0 M205.0 490.0L213.0 510.0L221.0 490.0" fill="none" stroke="#808080" stroke-width="2"/>
<path d="M282.8 483.8V509.0 M274.3 487.5L282.8 509.0L291.3 487.5" fill="none" stroke="#808080" stroke-width="2"/>
<path d="M332.0 393.0V418.0 M323.0 397.5L332.0 418.0L341.0 397.5" fill="none" stroke="#808080" stroke-width="2"/>
<path d="M402.0 380.0V406.0 M393.0 385.5L402.0 406.0L411.0 385.5" fill="none" stroke="#808080" stroke-width="2"/>
<path d="M472.0 309.7V335.0 M463.0 314.5L472.0 335.0L481.0 314.5" fill="none" stroke="#808080" stroke-width="2"/>
<path d="M535.0 251.6V276.9 M526.0 256.9L535.0 276.9L544.0 256.9" fill="none" stroke="#808080" stroke-width="2"/>
<path d="M563.0 244.0V269.4 M554.4 249.7L563.0 269.4L571.6 249.7" fill="none" stroke="#808080" stroke-width="2"/>
<path d="M632.8 195.3V220.6 M623.8 200.0L632.8 220.6L641.8 200.0" fill="none" stroke="#808080" stroke-width="2"/>
<path d="M689.4 168.0V191.6 M680.0 171.9L689.4 191.6L698.8 171.9" fill="none" stroke="#808080" stroke-width="2"/>
<path d="M766.0 121.0V145.6 M756.7 125.0L766.0 145.6L775.3 125.0" fill="none" stroke="#808080" stroke-width="2"/>
<path d="M353.0 517.5V489.4 M343.6 508.0L353.0 489.4L362.4 508.0" fill="none" stroke="#808080" stroke-width="2"/>
<path d="M220.0 643.0V611.0 M211.0 631.6L220.0 611.0L229.0 631.6" fill="none" stroke="#00ee00" stroke-width="2.2"/>
<path d="M290.0 545.6V513.8 M280.7 534.8L290.0 513.8L299.3 534.8" fill="none" stroke="#00ee00" stroke-width="2.2"/>
<path d="M360.0 500.6V469.7 M351.4 488.4L360.0 469.7L368.6 488.4" fill="none" stroke="#00ee00" stroke-width="2.2"/>
<path d="M409.0 487.5V454.7 M400.0 476.0L409.0 454.7L418.0 476.0" fill="none" stroke="#00ee00" stroke-width="2.2"/>
<path d="M479.0 436.0V404.0 M469.6 424.7L479.0 404.0L488.4 424.7" fill="none" stroke="#00ee00" stroke-width="2.2"/>
<path d="M542.0 389.4V356.6 M532.6 377.6L542.0 356.6L551.4 377.6" fill="none" stroke="#00ee00" stroke-width="2.2"/>
<path d="M577.0 375.0V342.5 M567.7 364.0L577.0 342.5L586.3 364.0" fill="none" stroke="#00ee00" stroke-width="2.2"/>
<path d="M639.7 297.5V264.7 M630.2 286.0L639.7 264.7L649.2 286.0" fill="none" stroke="#00ee00" stroke-width="2.2"/>
<path d="M696.0 280.0V247.8 M687.0 268.4L696.0 247.8L705.0 268.4" fill="none" stroke="#00ee00" stroke-width="2.2"/>
<path d="M346.4 412.5V437.0 M337.9 416.5L346.4 437.0L354.9 416.5" fill="none" stroke="#ff0000" stroke-width="2.2"/>
<path d="M402.7 408.8V423.8 M396.0 410.6L402.7 423.8L409.4 410.6" fill="none" stroke="#ff0000" stroke-width="1"/>
<path d="M815 231.5H865" stroke="#f03040" stroke-width="1.300"/>
<path d="M815 414H871.5" stroke="#f03040" stroke-width="1.300"/>
<path d="M815 596.5H871.5" stroke="#f03040" stroke-width="1.300"/>
<path d="M815 691.5H871.5" stroke="#f03040" stroke-width="1.300"/>
</g>
<g clip-path="url(#co)">
<g fill="#00f" shape-rendering="crispEdges"><rect x="80" y="866" width="1" height="47"/><rect x="87" y="855" width="1" height="58"/><rect x="94" y="851" width="1" height="62"/><rect x="101" y="846" width="1" height="67"/><rect x="108" y="834" width="1" height="79"/><rect x="115" y="819" width="1" height="94"/><rect x="122" y="805" width="1" height="108"/><rect x="129" y="791" width="1" height="122"/><rect x="136" y="778" width="1" height="135"/><rect x="143" y="776" width="1" height="137"/><rect x="150" y="776" width="1" height="137"/><rect x="157" y="774" width="1" height="139"/><rect x="164" y="773" width="1" height="140"/><rect x="171" y="775" width="1" height="138"/><rect x="178" y="775" width="1" height="138"/><rect x="185" y="779" width="1" height="134"/><rect x="192" y="781" width="1" height="132"/><rect x="199" y="784" width="1" height="129"/><rect x="206" y="787" width="1" height="126"/><rect x="213" y="791" width="1" height="122"/><rect x="220" y="793" width="1" height="120"/><rect x="227" y="797" width="1" height="116"/><rect x="234" y="797" width="1" height="116"/><rect x="241" y="796" width="1" height="117"/><rect x="248" y="790" width="1" height="123"/><rect x="255" y="780" width="1" height="133"/><rect x="262" y="774" width="1" height="139"/><rect x="269" y="768" width="1" height="145"/><rect x="276" y="761" width="1" height="152"/><rect x="283" y="764" width="1" height="149"/><rect x="290" y="773" width="1" height="140"/><rect x="297" y="776" width="1" height="137"/><rect x="304" y="780" width="1" height="133"/><rect x="311" y="786" width="1" height="127"/><rect x="318" y="787" width="1" height="126"/><rect x="325" y="790" width="1" height="123"/><rect x="332" y="800" width="1" height="113"/><rect x="339" y="815" width="1" height="98"/><rect x="346" y="831" width="1" height="82"/><rect x="353" y="849" width="1" height="64"/><rect x="360" y="859" width="1" height="54"/><rect x="367" y="863" width="1" height="50"/><rect x="374" y="859" width="1" height="54"/><rect x="381" y="855" width="1" height="58"/><rect x="388" y="848" width="1" height="65"/><rect x="395" y="848" width="1" height="65"/><rect x="402" y="854" width="1" height="59"/><rect x="409" y="860" width="1" height="53"/><rect x="416" y="859" width="1" height="54"/><rect x="423" y="855" width="1" height="58"/><rect x="430" y="848" width="1" height="65"/><rect x="437" y="831" width="1" height="82"/><rect x="444" y="821" width="1" height="92"/><rect x="451" y="816" width="1" height="97"/><rect x="458" y="815" width="1" height="98"/><rect x="465" y="812" width="1" height="101"/><rect x="472" y="820" width="1" height="93"/><rect x="479" y="826" width="1" height="87"/><rect x="486" y="825" width="1" height="88"/><rect x="493" y="827" width="1" height="86"/><rect x="500" y="828" width="1" height="85"/><rect x="507" y="818" width="1" height="95"/><rect x="514" y="807" width="1" height="106"/><rect x="521" y="801" width="1" height="112"/><rect x="528" y="794" width="1" height="119"/><rect x="535" y="798" width="1" height="115"/><rect x="542" y="804" width="1" height="109"/><rect x="549" y="805" width="1" height="108"/><rect x="556" y="810" width="1" height="103"/><rect x="563" y="822" width="1" height="91"/><rect x="570" y="824" width="1" height="89"/><rect x="577" y="819" width="1" height="94"/><rect x="584" y="814" width="1" height="99"/><rect x="591" y="812" width="1" height="101"/><rect x="598" y="806" width="1" height="107"/><rect x="605" y="798" width="1" height="115"/><rect x="612" y="803" width="1" height="110"/><rect x="619" y="807" width="1" height="106"/><rect x="626" y="807" width="1" height="106"/><rect x="633" y="810" width="1" height="103"/><rect x="640" y="811" width="1" height="102"/><rect x="647" y="811" width="1" height="102"/><rect x="654" y="815" width="1" height="98"/><rect x="661" y="824" width="1" height="89"/><rect x="668" y="821" width="1" height="92"/><rect x="675" y="820" width="1" height="93"/><rect x="682" y="825" width="1" height="88"/><rect x="689" y="835" width="1" height="78"/><rect x="696" y="832" width="1" height="81"/><rect x="703" y="836" width="1" height="77"/><rect x="710" y="837" width="1" height="76"/><rect x="717" y="830" width="1" height="83"/><rect x="724" y="821" width="1" height="92"/><rect x="731" y="817" width="1" height="96"/><rect x="738" y="814" width="1" height="99"/><rect x="745" y="815" width="1" height="98"/><rect x="752" y="819" width="1" height="94"/><rect x="759" y="824" width="1" height="89"/><rect x="766" y="832" width="1" height="81"/></g>
<path d="M80.7 866.0 L87.0 864.0 L96.6 864.0 L113.5 860.3 L132.0 851.0 L151.0 841.6 L169.8 832.8 L186.6 825.6 L207.0 820.0 L226.0 816.6 L244.8 814.0 L263.5 808.8 L282.0 803.0 L301.0 799.8 L311.0 798.4 L324.4 797.5 L333.8 797.5 L343.0 799.4 L356.0 804.6 L375.0 812.0 L393.8 817.0 L412.5 822.2 L431.0 826.5 L444.4 826.5 L451.9 825.2 L468.8 824.3 L487.5 824.7 L506.0 824.7 L521.0 821.9 L534.4 819.6 L545.0 819.0 L555.3 817.2 L563.8 818.5 L591.9 818.5 L610.6 815.3 L627.5 814.4 L661.2 814.4 L672.5 815.9 L689.4 817.2 L713.8 820.4 L730.6 820.4 L738.0 819.4 L753.0 819.4 L758.8 820.4 L766.6 820.4" fill="none" stroke="#000" stroke-width="1" shape-rendering="crispEdges"/>
<path d="M332.2 750.0V776.9 M322.9 755.3L332.2 776.9L341.6 755.3" fill="none" stroke="#ff0000" stroke-width="2"/>
<path d="M479.0 750.0V805.0 M469.7 783.4L479.0 805.0L488.3 783.4" fill="none" stroke="#ff0000" stroke-width="2"/>
<path d="M563.4 750.0V799.8 M554.2 778.8L563.4 799.8L572.6 778.8" fill="none" stroke="#ff0000" stroke-width="2"/>
<path d="M660.9 750.0V800.7 M651.7 779.3L660.9 800.7L670.1 779.3" fill="none" stroke="#ff0000" stroke-width="2"/>
<path d="M752.2 758.0V812.5 M742.8 791.5L752.2 812.5L761.6 791.5" fill="none" stroke="#ff0000" stroke-width="2"/>
</g>
<path d="M168 920.5L174 936.5H208.75L214.75 920.5" fill="#d4d0c8" stroke="#000" stroke-width="1"/>
<path d="M207.75 920.5L213.75 936.5H294L300 920.5" fill="#d4d0c8" stroke="#000" stroke-width="1"/>
<path d="M293 920.5L299 936.5H378.25L384.25 920.5" fill="#d4d0c8" stroke="#000" stroke-width="1"/>
<path d="M377.25 920.5L383.25 936.5H443L449 920.5" fill="#d4d0c8" stroke="#000" stroke-width="1"/>
<path d="M442 920.5L448 936.5H502L508 920.5" fill="#d4d0c8" stroke="#000" stroke-width="1"/>
<path d="M501 920.5L507 936.5H607L613 920.5" fill="#d4d0c8" stroke="#000" stroke-width="1"/>
<path d="M113 920L119.5 936.5H169L175 920" fill="#fff" stroke="#000" stroke-width="1"/>
<path d="M113.8 920.5H174.2" stroke="#fff" stroke-width="1.6"/></svg>
<div class="tab" style="left:122.25px">Osc 5,35</div>
<div class="tab" style="left:176px">CCI 20</div>
<div class="tab" style="left:217.25px">MACD 19, 39, 9</div>
<div class="tab" style="left:302.25px">Money Flow 11</div>
<div class="tab" style="left:386px">RSI 14, 7, 3</div>
<div class="tab" style="left:451.5px">RSI 2, 7, 3</div>
<div class="tab" style="left:510px">On Balance Volume</div>
<div class="t" style="left:780px;top:132px;letter-spacing:-0.1px">COVER SIGNAL</div>
<div class="t" style="left:920px;top:129px;letter-spacing:0.08px">Next Echo and Pulse Highs</div>
<div class="t" style="left:920px;top:177px;letter-spacing:0.08px">* COVER SIGNAL *</div>
<div class="t" style="left:920px;top:193px;letter-spacing:0.08px">* WARNING *</div>
<div class="t" style="left:920px;top:225px;letter-spacing:0.08px">COVER Signal at 5193 on 02 April</div>
<div class="t" style="left:920px;top:257px;letter-spacing:0.08px">T volume Osc: positive on 14 Feb</div>
<div class="t" style="left:920px;top:273px;letter-spacing:0.08px">Down</div>
<div class="t" style="left:920px;top:305px;letter-spacing:0.08px">Osc: SELL Signal on 28 Mar</div>
<div class="t" style="left:920px;top:321px;letter-spacing:0.08px">Down</div>
<div class="t" style="left:920px;top:385px;letter-spacing:0.08px">Click here for</div>
<div class="t" style="left:920px;top:401px;letter-spacing:0.08px">More Information...</div>
<div class="t" style="left:920px;top:688px">Next Projected Low(s)</div>
<div class="t" style="left:829px;top:214px">5106</div>
<div class="t" style="left:829px;top:396px">4781</div>
<div class="t" style="left:829px;top:579px">4457</div>
<div class="t" style="left:829px;top:674px">4289</div>
<div class="t" style="left:759px;top:758px;letter-spacing:0.17px">OSC SELL Signal</div>
</div></body></html>
